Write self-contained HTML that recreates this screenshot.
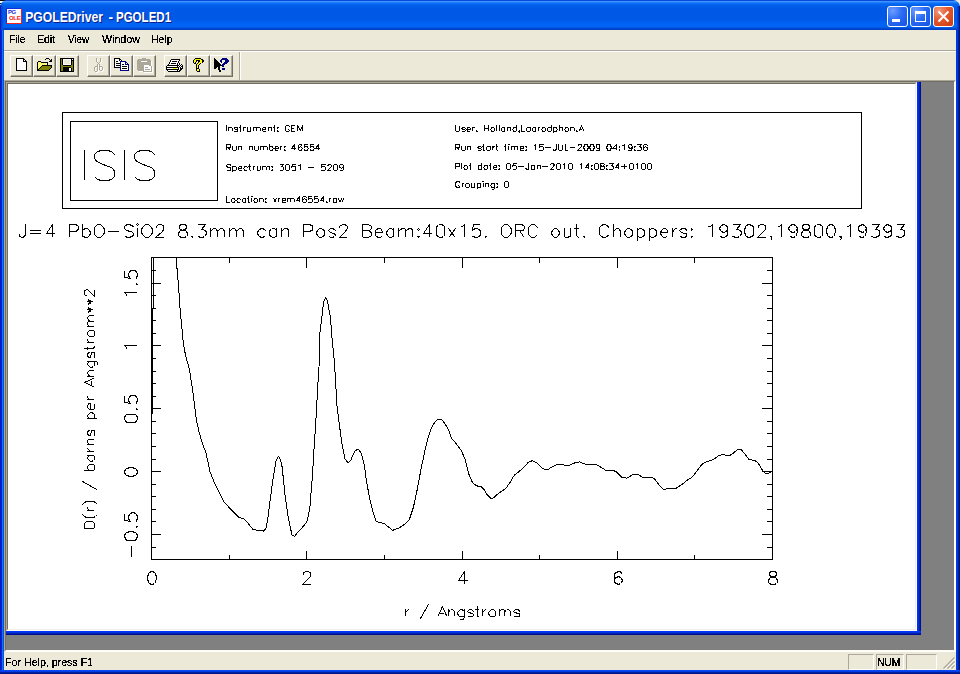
<!DOCTYPE html>
<html><head><meta charset="utf-8"><style>
*{box-sizing:border-box}
html,body{margin:0;padding:0}
body{width:960px;height:674px;overflow:hidden;position:relative;background:#ece9d8;font-family:"Liberation Sans",sans-serif}
.a{position:absolute}
svg text{font-family:"Liberation Sans",sans-serif}
.btn{position:absolute;top:55px;width:23px;height:22px;border-style:solid;border-width:1px;border-color:#fff #716f64 #716f64 #fff;box-shadow:inset -1px -1px 0 #aca899}
</style></head><body>
<!-- frame -->
<div class="a" style="left:0;top:0;width:960px;height:674px;background:#0050e0"></div>
<div class="a" style="left:0;top:30px;width:4px;height:644px;background:linear-gradient(90deg,#0010d0 0,#0820cc 1px,#0a24cc 2px,#1870ee 2px,#1870ee 3px,#0055e2 3px)"></div>
<div class="a" style="left:956px;top:30px;width:4px;height:644px;background:linear-gradient(90deg,#0037f0 0,#0037f0 1px,#003ad0 1px,#003ad0 2px,#00228f 2px,#00228f 3px,#001580 3px)"></div>
<div class="a" style="left:0;top:670px;width:960px;height:4px;background:linear-gradient(180deg,#0a47f0 0,#0a47f0 1px,#003de8 1px,#003de8 2px,#0022a0 2px,#0022a0 3px,#00138a 3px)"></div>
<!-- title bar -->
<div class="a" style="left:0;top:0;width:8px;height:8px;background:linear-gradient(180deg,#000 0,#000 1px,#fff 1px,#fff 3px,#000 3px,#000 4px,#fff 4px,#fff 5px,#000 5px)"></div>
<div class="a" style="left:952px;top:0;width:8px;height:8px;background:#ece9d8"></div>
<div class="a" style="left:0;top:0;width:960px;height:30px;border-radius:7px 7px 0 0;background:linear-gradient(180deg,#0a48d8 0px,#0a48d8 1px,#3d95ff 1px,#3d95ff 2px,#2b8aff 2px,#1274fa 3px,#0666ef 4px,#005fe8 6px,#0058e6 9px,#0058e6 18px,#005ae9 20px,#0064f6 24px,#0062f3 27px,#0052dc 28px,#003fc3 29px,#003fc3 30px)"></div>
<div class="a" style="left:0;top:6px;width:3px;height:24px;background:linear-gradient(90deg,#0020c0 0,#0020c0 1px,#0a40d8 1px,#0a40d8 2px,#0050e0 2px)"></div>
<div class="a" style="left:957px;top:6px;width:3px;height:24px;background:linear-gradient(90deg,#0048d8 0,#0048d8 1px,#0030b8 1px,#0030b8 2px,#001a90 2px)"></div>
<!-- title icon -->
<div class="a" style="left:6px;top:8px;width:16px;height:16px;background:#fff;border-left:1px solid #1030e0;border-top:1px solid #1030e0;border-right:1px solid #f02020;border-bottom:1px solid #f02020"></div>
<div class="a" style="left:8px;top:9px;font:bold 6px 'Liberation Sans',sans-serif;color:#1a2ad8;letter-spacing:-0.5px">PG</div>
<div class="a" style="left:9px;top:15px;font:bold 6px 'Liberation Sans',sans-serif;color:#f01818;letter-spacing:-0.3px">OLE</div>
<svg class="a" style="left:0;top:0" width="300" height="30" font-family="Liberation Sans" font-weight="bold"><g fill="#0a1f8a" transform="translate(1,1)"><text x="25.19" y="22" font-size="15.5" textLength="77.80" lengthAdjust="spacingAndGlyphs">PGOLEDriver</text>
<text x="108.46" y="22" font-size="15.5" textLength="4.59" lengthAdjust="spacingAndGlyphs">-</text>
<text x="115.93" y="22" font-size="15.5" textLength="55.19" lengthAdjust="spacingAndGlyphs">PGOLED1</text></g><g fill="#fff"><text x="25.19" y="22" font-size="15.5" textLength="77.80" lengthAdjust="spacingAndGlyphs">PGOLEDriver</text>
<text x="108.46" y="22" font-size="15.5" textLength="4.59" lengthAdjust="spacingAndGlyphs">-</text>
<text x="115.93" y="22" font-size="15.5" textLength="55.19" lengthAdjust="spacingAndGlyphs">PGOLED1</text></g></svg>
<!-- caption buttons -->
<div class="a" style="left:887px;top:6px;width:21px;height:21px;border:1px solid #fff;border-radius:3px;background:radial-gradient(circle at 25% 20%,#6f9cff 0,#2a6cf5 45%,#1550e0 100%)"></div>
<div class="a" style="left:892px;top:19px;width:8px;height:3px;background:#fff"></div>
<div class="a" style="left:910px;top:6px;width:21px;height:21px;border:1px solid #fff;border-radius:3px;background:radial-gradient(circle at 25% 20%,#6f9cff 0,#2a6cf5 45%,#1550e0 100%)"></div>
<div class="a" style="left:915px;top:11px;width:11px;height:11px;border:1px solid #fff;border-top-width:3px"></div>
<div class="a" style="left:933px;top:6px;width:21px;height:21px;border:1px solid #fff;border-radius:3px;background:radial-gradient(circle at 25% 20%,#f29b7c 0,#e4582e 45%,#c83a10 100%)"></div>
<svg class="a" style="left:933px;top:6px" width="21" height="21"><path d="M5.5,5.5L15.5,15.5M15.5,5.5L5.5,15.5" stroke="#fff" stroke-width="2"/></svg>
<!-- menu bar -->
<div class="a" style="left:4px;top:30px;width:952px;height:20px;background:#ece9d8"></div>
<svg class="a" style="left:0;top:30px" width="300" height="20" viewBox="0 30 300 20" font-family="Liberation Sans" fill="#000"><filter id="u1" x="0" y="0" width="100%" height="100%"><feComponentTransfer><feFuncA type="discrete" tableValues="0 1 1"/></feComponentTransfer></filter><g filter="url(#u1)"><text x="9.17" y="43" font-size="11" textLength="16.28" lengthAdjust="spacingAndGlyphs">File</text>
<text x="37.15" y="43" font-size="11" textLength="17.93" lengthAdjust="spacingAndGlyphs">Edit</text>
<text x="67.96" y="43" font-size="11" textLength="21.02" lengthAdjust="spacingAndGlyphs">View</text>
<text x="101.95" y="43" font-size="11" textLength="38.02" lengthAdjust="spacingAndGlyphs">Window</text>
<text x="151.15" y="43" font-size="11" textLength="21.28" lengthAdjust="spacingAndGlyphs">Help</text></g></svg>
<div class="a" style="left:4px;top:50px;width:952px;height:1px;background:#aca899"></div>
<div class="a" style="left:4px;top:51px;width:952px;height:1px;background:#fff"></div>
<!-- toolbar -->
<div class="a" style="left:4px;top:52px;width:952px;height:28px;background:#ece9d8"></div>
<div class="a" style="left:239px;top:52px;width:1px;height:28px;background:#aca899"></div>
<div class="a" style="left:240px;top:52px;width:1px;height:28px;background:#fff"></div>
<div class="btn" style="left:10px"></div><div class="btn" style="left:33px"></div><div class="btn" style="left:56px"></div>
<div class="btn" style="left:87px"></div><div class="btn" style="left:110px"></div><div class="btn" style="left:133px"></div>
<div class="btn" style="left:164px"></div><div class="btn" style="left:187px"></div><div class="btn" style="left:210px"></div>

<svg class="a" style="left:0;top:50px" width="240" height="30" viewBox="0 50 240 30" shape-rendering="crispEdges"><rect x="16" y="58" width="8" height="1" fill="#000"/><rect x="16" y="59" width="1" height="1" fill="#000"/><rect x="17" y="59" width="6" height="1" fill="#fff"/><rect x="23" y="59" width="2" height="1" fill="#000"/><rect x="16" y="60" width="1" height="1" fill="#000"/><rect x="17" y="60" width="6" height="1" fill="#fff"/><rect x="23" y="60" width="1" height="1" fill="#000"/><rect x="24" y="60" width="1" height="1" fill="#fff"/><rect x="25" y="60" width="1" height="1" fill="#000"/><rect x="16" y="61" width="1" height="1" fill="#000"/><rect x="17" y="61" width="6" height="1" fill="#fff"/><rect x="23" y="61" width="4" height="1" fill="#000"/><rect x="16" y="62" width="1" height="1" fill="#000"/><rect x="17" y="62" width="9" height="1" fill="#fff"/><rect x="26" y="62" width="1" height="1" fill="#000"/><rect x="16" y="63" width="1" height="1" fill="#000"/><rect x="17" y="63" width="9" height="1" fill="#fff"/><rect x="26" y="63" width="1" height="1" fill="#000"/><rect x="16" y="64" width="1" height="1" fill="#000"/><rect x="17" y="64" width="9" height="1" fill="#fff"/><rect x="26" y="64" width="1" height="1" fill="#000"/><rect x="16" y="65" width="1" height="1" fill="#000"/><rect x="17" y="65" width="9" height="1" fill="#fff"/><rect x="26" y="65" width="1" height="1" fill="#000"/><rect x="16" y="66" width="1" height="1" fill="#000"/><rect x="17" y="66" width="9" height="1" fill="#fff"/><rect x="26" y="66" width="1" height="1" fill="#000"/><rect x="16" y="67" width="1" height="1" fill="#000"/><rect x="17" y="67" width="9" height="1" fill="#fff"/><rect x="26" y="67" width="1" height="1" fill="#000"/><rect x="16" y="68" width="1" height="1" fill="#000"/><rect x="17" y="68" width="9" height="1" fill="#fff"/><rect x="26" y="68" width="1" height="1" fill="#000"/><rect x="16" y="69" width="1" height="1" fill="#000"/><rect x="17" y="69" width="9" height="1" fill="#fff"/><rect x="26" y="69" width="1" height="1" fill="#000"/><rect x="16" y="70" width="11" height="1" fill="#000"/><rect x="46" y="58" width="3" height="1" fill="#000"/><rect x="45" y="59" width="1" height="1" fill="#000"/><rect x="49" y="59" width="1" height="1" fill="#000"/><rect x="51" y="59" width="1" height="1" fill="#000"/><rect x="50" y="60" width="2" height="1" fill="#000"/><rect x="38" y="61" width="3" height="1" fill="#000"/><rect x="49" y="61" width="3" height="1" fill="#000"/><rect x="37" y="62" width="1" height="1" fill="#000"/><rect x="38" y="62" width="1" height="1" fill="#ff0"/><rect x="39" y="62" width="1" height="1" fill="#fff"/><rect x="40" y="62" width="1" height="1" fill="#ff0"/><rect x="41" y="62" width="7" height="1" fill="#000"/><rect x="37" y="63" width="1" height="1" fill="#000"/><rect x="38" y="63" width="1" height="1" fill="#fff"/><rect x="39" y="63" width="1" height="1" fill="#ff0"/><rect x="40" y="63" width="1" height="1" fill="#fff"/><rect x="41" y="63" width="1" height="1" fill="#ff0"/><rect x="42" y="63" width="1" height="1" fill="#fff"/><rect x="43" y="63" width="1" height="1" fill="#ff0"/><rect x="44" y="63" width="1" height="1" fill="#fff"/><rect x="45" y="63" width="1" height="1" fill="#ff0"/><rect x="46" y="63" width="1" height="1" fill="#fff"/><rect x="47" y="63" width="1" height="1" fill="#000"/><rect x="37" y="64" width="1" height="1" fill="#000"/><rect x="38" y="64" width="1" height="1" fill="#ff0"/><rect x="39" y="64" width="1" height="1" fill="#fff"/><rect x="40" y="64" width="1" height="1" fill="#ff0"/><rect x="41" y="64" width="1" height="1" fill="#fff"/><rect x="42" y="64" width="1" height="1" fill="#ff0"/><rect x="43" y="64" width="1" height="1" fill="#fff"/><rect x="44" y="64" width="1" height="1" fill="#ff0"/><rect x="45" y="64" width="1" height="1" fill="#fff"/><rect x="46" y="64" width="1" height="1" fill="#ff0"/><rect x="47" y="64" width="1" height="1" fill="#000"/><rect x="37" y="65" width="1" height="1" fill="#000"/><rect x="38" y="65" width="1" height="1" fill="#fff"/><rect x="39" y="65" width="1" height="1" fill="#ff0"/><rect x="40" y="65" width="1" height="1" fill="#fff"/><rect x="41" y="65" width="1" height="1" fill="#ff0"/><rect x="42" y="65" width="10" height="1" fill="#000"/><rect x="37" y="66" width="1" height="1" fill="#000"/><rect x="38" y="66" width="1" height="1" fill="#ff0"/><rect x="39" y="66" width="1" height="1" fill="#fff"/><rect x="40" y="66" width="1" height="1" fill="#ff0"/><rect x="41" y="66" width="1" height="1" fill="#000"/><rect x="42" y="66" width="9" height="1" fill="#808000"/><rect x="51" y="66" width="1" height="1" fill="#000"/><rect x="37" y="67" width="1" height="1" fill="#000"/><rect x="38" y="67" width="1" height="1" fill="#fff"/><rect x="39" y="67" width="1" height="1" fill="#ff0"/><rect x="40" y="67" width="1" height="1" fill="#000"/><rect x="41" y="67" width="10" height="1" fill="#808000"/><rect x="51" y="67" width="1" height="1" fill="#000"/><rect x="37" y="68" width="1" height="1" fill="#000"/><rect x="38" y="68" width="1" height="1" fill="#ff0"/><rect x="39" y="68" width="1" height="1" fill="#000"/><rect x="40" y="68" width="10" height="1" fill="#808000"/><rect x="50" y="68" width="1" height="1" fill="#000"/><rect x="37" y="69" width="2" height="1" fill="#000"/><rect x="39" y="69" width="10" height="1" fill="#808000"/><rect x="49" y="69" width="1" height="1" fill="#000"/><rect x="37" y="70" width="12" height="1" fill="#000"/><rect x="60" y="58" width="14" height="1" fill="#000"/><rect x="60" y="59" width="1" height="1" fill="#000"/><rect x="61" y="59" width="1" height="1" fill="#808000"/><rect x="62" y="59" width="1" height="1" fill="#000"/><rect x="63" y="59" width="8" height="1" fill="#fff"/><rect x="71" y="59" width="1" height="1" fill="#000"/><rect x="72" y="59" width="1" height="1" fill="#fff"/><rect x="73" y="59" width="1" height="1" fill="#000"/><rect x="60" y="60" width="1" height="1" fill="#000"/><rect x="61" y="60" width="1" height="1" fill="#808000"/><rect x="62" y="60" width="1" height="1" fill="#000"/><rect x="63" y="60" width="1" height="1" fill="#fff"/><rect x="64" y="60" width="6" height="1" fill="#ece9d8"/><rect x="70" y="60" width="1" height="1" fill="#fff"/><rect x="71" y="60" width="3" height="1" fill="#000"/><rect x="60" y="61" width="1" height="1" fill="#000"/><rect x="61" y="61" width="1" height="1" fill="#808000"/><rect x="62" y="61" width="1" height="1" fill="#000"/><rect x="63" y="61" width="1" height="1" fill="#fff"/><rect x="64" y="61" width="6" height="1" fill="#ece9d8"/><rect x="70" y="61" width="1" height="1" fill="#fff"/><rect x="71" y="61" width="1" height="1" fill="#000"/><rect x="72" y="61" width="1" height="1" fill="#808000"/><rect x="73" y="61" width="1" height="1" fill="#000"/><rect x="60" y="62" width="1" height="1" fill="#000"/><rect x="61" y="62" width="1" height="1" fill="#808000"/><rect x="62" y="62" width="1" height="1" fill="#000"/><rect x="63" y="62" width="1" height="1" fill="#fff"/><rect x="64" y="62" width="6" height="1" fill="#ece9d8"/><rect x="70" y="62" width="1" height="1" fill="#fff"/><rect x="71" y="62" width="1" height="1" fill="#000"/><rect x="72" y="62" width="1" height="1" fill="#808000"/><rect x="73" y="62" width="1" height="1" fill="#000"/><rect x="60" y="63" width="1" height="1" fill="#000"/><rect x="61" y="63" width="1" height="1" fill="#808000"/><rect x="62" y="63" width="1" height="1" fill="#000"/><rect x="63" y="63" width="1" height="1" fill="#fff"/><rect x="64" y="63" width="6" height="1" fill="#ece9d8"/><rect x="70" y="63" width="1" height="1" fill="#fff"/><rect x="71" y="63" width="1" height="1" fill="#000"/><rect x="72" y="63" width="1" height="1" fill="#808000"/><rect x="73" y="63" width="1" height="1" fill="#000"/><rect x="60" y="64" width="1" height="1" fill="#000"/><rect x="61" y="64" width="1" height="1" fill="#808000"/><rect x="62" y="64" width="1" height="1" fill="#000"/><rect x="63" y="64" width="8" height="1" fill="#fff"/><rect x="71" y="64" width="1" height="1" fill="#000"/><rect x="72" y="64" width="1" height="1" fill="#808000"/><rect x="73" y="64" width="1" height="1" fill="#000"/><rect x="60" y="65" width="1" height="1" fill="#000"/><rect x="61" y="65" width="2" height="1" fill="#808000"/><rect x="63" y="65" width="8" height="1" fill="#000"/><rect x="71" y="65" width="2" height="1" fill="#808000"/><rect x="73" y="65" width="1" height="1" fill="#000"/><rect x="60" y="66" width="1" height="1" fill="#000"/><rect x="61" y="66" width="12" height="1" fill="#808000"/><rect x="73" y="66" width="1" height="1" fill="#000"/><rect x="60" y="67" width="1" height="1" fill="#000"/><rect x="61" y="67" width="2" height="1" fill="#808000"/><rect x="63" y="67" width="8" height="1" fill="#000"/><rect x="71" y="67" width="2" height="1" fill="#808000"/><rect x="73" y="67" width="1" height="1" fill="#000"/><rect x="60" y="68" width="1" height="1" fill="#000"/><rect x="61" y="68" width="2" height="1" fill="#808000"/><rect x="63" y="68" width="6" height="1" fill="#000"/><rect x="69" y="68" width="2" height="1" fill="#fff"/><rect x="71" y="68" width="1" height="1" fill="#000"/><rect x="72" y="68" width="1" height="1" fill="#808000"/><rect x="73" y="68" width="1" height="1" fill="#000"/><rect x="60" y="69" width="1" height="1" fill="#000"/><rect x="61" y="69" width="2" height="1" fill="#808000"/><rect x="63" y="69" width="6" height="1" fill="#000"/><rect x="69" y="69" width="2" height="1" fill="#fff"/><rect x="71" y="69" width="1" height="1" fill="#000"/><rect x="72" y="69" width="1" height="1" fill="#808000"/><rect x="73" y="69" width="1" height="1" fill="#000"/><rect x="60" y="70" width="1" height="1" fill="#000"/><rect x="61" y="70" width="2" height="1" fill="#808000"/><rect x="63" y="70" width="6" height="1" fill="#000"/><rect x="69" y="70" width="2" height="1" fill="#fff"/><rect x="71" y="70" width="1" height="1" fill="#000"/><rect x="72" y="70" width="1" height="1" fill="#808000"/><rect x="73" y="70" width="1" height="1" fill="#000"/><rect x="60" y="71" width="14" height="1" fill="#000"/><rect x="97" y="59" width="1" height="1" fill="#fff"/><rect x="101" y="59" width="1" height="1" fill="#fff"/><rect x="97" y="60" width="1" height="1" fill="#fff"/><rect x="101" y="60" width="1" height="1" fill="#fff"/><rect x="97" y="61" width="1" height="1" fill="#fff"/><rect x="101" y="61" width="1" height="1" fill="#fff"/><rect x="97" y="62" width="1" height="1" fill="#fff"/><rect x="101" y="62" width="1" height="1" fill="#fff"/><rect x="98" y="63" width="1" height="1" fill="#fff"/><rect x="100" y="63" width="1" height="1" fill="#fff"/><rect x="99" y="64" width="1" height="1" fill="#fff"/><rect x="98" y="65" width="1" height="1" fill="#fff"/><rect x="100" y="65" width="1" height="1" fill="#fff"/><rect x="98" y="66" width="1" height="1" fill="#fff"/><rect x="100" y="66" width="1" height="1" fill="#fff"/><rect x="96" y="67" width="3" height="1" fill="#fff"/><rect x="100" y="67" width="3" height="1" fill="#fff"/><rect x="95" y="68" width="1" height="1" fill="#fff"/><rect x="98" y="68" width="1" height="1" fill="#fff"/><rect x="100" y="68" width="1" height="1" fill="#fff"/><rect x="103" y="68" width="1" height="1" fill="#fff"/><rect x="95" y="69" width="1" height="1" fill="#fff"/><rect x="98" y="69" width="1" height="1" fill="#fff"/><rect x="100" y="69" width="1" height="1" fill="#fff"/><rect x="103" y="69" width="1" height="1" fill="#fff"/><rect x="95" y="70" width="1" height="1" fill="#fff"/><rect x="98" y="70" width="1" height="1" fill="#fff"/><rect x="100" y="70" width="1" height="1" fill="#fff"/><rect x="103" y="70" width="1" height="1" fill="#fff"/><rect x="95" y="71" width="1" height="1" fill="#fff"/><rect x="98" y="71" width="1" height="1" fill="#fff"/><rect x="101" y="71" width="2" height="1" fill="#fff"/><rect x="96" y="72" width="2" height="1" fill="#fff"/><rect x="96" y="58" width="1" height="1" fill="#aca899"/><rect x="100" y="58" width="1" height="1" fill="#aca899"/><rect x="96" y="59" width="1" height="1" fill="#aca899"/><rect x="100" y="59" width="1" height="1" fill="#aca899"/><rect x="96" y="60" width="1" height="1" fill="#aca899"/><rect x="100" y="60" width="1" height="1" fill="#aca899"/><rect x="96" y="61" width="1" height="1" fill="#aca899"/><rect x="100" y="61" width="1" height="1" fill="#aca899"/><rect x="97" y="62" width="1" height="1" fill="#aca899"/><rect x="99" y="62" width="1" height="1" fill="#aca899"/><rect x="98" y="63" width="1" height="1" fill="#aca899"/><rect x="97" y="64" width="1" height="1" fill="#aca899"/><rect x="99" y="64" width="1" height="1" fill="#aca899"/><rect x="97" y="65" width="1" height="1" fill="#aca899"/><rect x="99" y="65" width="1" height="1" fill="#aca899"/><rect x="95" y="66" width="3" height="1" fill="#aca899"/><rect x="99" y="66" width="3" height="1" fill="#aca899"/><rect x="94" y="67" width="1" height="1" fill="#aca899"/><rect x="97" y="67" width="1" height="1" fill="#aca899"/><rect x="99" y="67" width="1" height="1" fill="#aca899"/><rect x="102" y="67" width="1" height="1" fill="#aca899"/><rect x="94" y="68" width="1" height="1" fill="#aca899"/><rect x="97" y="68" width="1" height="1" fill="#aca899"/><rect x="99" y="68" width="1" height="1" fill="#aca899"/><rect x="102" y="68" width="1" height="1" fill="#aca899"/><rect x="94" y="69" width="1" height="1" fill="#aca899"/><rect x="97" y="69" width="1" height="1" fill="#aca899"/><rect x="99" y="69" width="1" height="1" fill="#aca899"/><rect x="102" y="69" width="1" height="1" fill="#aca899"/><rect x="94" y="70" width="1" height="1" fill="#aca899"/><rect x="97" y="70" width="1" height="1" fill="#aca899"/><rect x="100" y="70" width="2" height="1" fill="#aca899"/><rect x="95" y="71" width="2" height="1" fill="#aca899"/><rect x="114" y="58" width="6" height="1" fill="#000"/><rect x="114" y="59" width="1" height="1" fill="#000"/><rect x="115" y="59" width="4" height="1" fill="#fff"/><rect x="119" y="59" width="2" height="1" fill="#000"/><rect x="114" y="60" width="1" height="1" fill="#000"/><rect x="115" y="60" width="4" height="1" fill="#fff"/><rect x="119" y="60" width="1" height="1" fill="#000"/><rect x="120" y="60" width="1" height="1" fill="#fff"/><rect x="121" y="60" width="1" height="1" fill="#000"/><rect x="114" y="61" width="1" height="1" fill="#000"/><rect x="115" y="61" width="1" height="1" fill="#fff"/><rect x="116" y="61" width="2" height="1" fill="#000"/><rect x="118" y="61" width="2" height="1" fill="#fff"/><rect x="120" y="61" width="6" height="1" fill="#000080"/><rect x="114" y="62" width="1" height="1" fill="#000"/><rect x="115" y="62" width="5" height="1" fill="#fff"/><rect x="120" y="62" width="1" height="1" fill="#000080"/><rect x="121" y="62" width="4" height="1" fill="#fff"/><rect x="125" y="62" width="2" height="1" fill="#000080"/><rect x="114" y="63" width="1" height="1" fill="#000"/><rect x="115" y="63" width="1" height="1" fill="#fff"/><rect x="116" y="63" width="4" height="1" fill="#000"/><rect x="120" y="63" width="1" height="1" fill="#000080"/><rect x="121" y="63" width="4" height="1" fill="#fff"/><rect x="125" y="63" width="1" height="1" fill="#000080"/><rect x="126" y="63" width="1" height="1" fill="#fff"/><rect x="127" y="63" width="1" height="1" fill="#000080"/><rect x="114" y="64" width="1" height="1" fill="#000"/><rect x="115" y="64" width="5" height="1" fill="#fff"/><rect x="120" y="64" width="1" height="1" fill="#000080"/><rect x="121" y="64" width="1" height="1" fill="#fff"/><rect x="122" y="64" width="2" height="1" fill="#000"/><rect x="124" y="64" width="1" height="1" fill="#fff"/><rect x="125" y="64" width="4" height="1" fill="#000080"/><rect x="114" y="65" width="1" height="1" fill="#000"/><rect x="115" y="65" width="1" height="1" fill="#fff"/><rect x="116" y="65" width="4" height="1" fill="#000"/><rect x="120" y="65" width="1" height="1" fill="#000080"/><rect x="121" y="65" width="7" height="1" fill="#fff"/><rect x="128" y="65" width="1" height="1" fill="#000080"/><rect x="114" y="66" width="1" height="1" fill="#000"/><rect x="115" y="66" width="5" height="1" fill="#fff"/><rect x="120" y="66" width="1" height="1" fill="#000080"/><rect x="121" y="66" width="1" height="1" fill="#fff"/><rect x="122" y="66" width="5" height="1" fill="#000"/><rect x="127" y="66" width="1" height="1" fill="#fff"/><rect x="128" y="66" width="1" height="1" fill="#000080"/><rect x="114" y="67" width="6" height="1" fill="#000"/><rect x="120" y="67" width="1" height="1" fill="#000080"/><rect x="121" y="67" width="7" height="1" fill="#fff"/><rect x="128" y="67" width="1" height="1" fill="#000080"/><rect x="120" y="68" width="1" height="1" fill="#000080"/><rect x="121" y="68" width="1" height="1" fill="#fff"/><rect x="122" y="68" width="5" height="1" fill="#000"/><rect x="127" y="68" width="1" height="1" fill="#fff"/><rect x="128" y="68" width="1" height="1" fill="#000080"/><rect x="120" y="69" width="1" height="1" fill="#000080"/><rect x="121" y="69" width="7" height="1" fill="#fff"/><rect x="128" y="69" width="1" height="1" fill="#000080"/><rect x="120" y="70" width="9" height="1" fill="#000080"/><rect x="143" y="59" width="4" height="1" fill="#fff"/><rect x="139" y="60" width="12" height="1" fill="#fff"/><rect x="138" y="61" width="14" height="1" fill="#fff"/><rect x="138" y="62" width="4" height="1" fill="#fff"/><rect x="148" y="62" width="4" height="1" fill="#fff"/><rect x="138" y="63" width="14" height="1" fill="#fff"/><rect x="138" y="64" width="14" height="1" fill="#fff"/><rect x="138" y="65" width="14" height="1" fill="#fff"/><rect x="138" y="66" width="7" height="1" fill="#fff"/><rect x="150" y="66" width="2" height="1" fill="#fff"/><rect x="138" y="67" width="7" height="1" fill="#fff"/><rect x="152" y="67" width="1" height="1" fill="#fff"/><rect x="138" y="68" width="7" height="1" fill="#fff"/><rect x="146" y="68" width="3" height="1" fill="#fff"/><rect x="152" y="68" width="1" height="1" fill="#fff"/><rect x="138" y="69" width="7" height="1" fill="#fff"/><rect x="152" y="69" width="1" height="1" fill="#fff"/><rect x="138" y="70" width="7" height="1" fill="#fff"/><rect x="146" y="70" width="5" height="1" fill="#fff"/><rect x="152" y="70" width="1" height="1" fill="#fff"/><rect x="139" y="71" width="6" height="1" fill="#fff"/><rect x="152" y="71" width="1" height="1" fill="#fff"/><rect x="144" y="72" width="9" height="1" fill="#fff"/><rect x="142" y="58" width="4" height="1" fill="#aca899"/><rect x="138" y="59" width="12" height="1" fill="#aca899"/><rect x="137" y="60" width="14" height="1" fill="#aca899"/><rect x="137" y="61" width="4" height="1" fill="#aca899"/><rect x="141" y="61" width="6" height="1" fill="#fff"/><rect x="147" y="61" width="4" height="1" fill="#aca899"/><rect x="137" y="62" width="14" height="1" fill="#aca899"/><rect x="137" y="63" width="14" height="1" fill="#aca899"/><rect x="137" y="64" width="14" height="1" fill="#aca899"/><rect x="137" y="65" width="7" height="1" fill="#aca899"/><rect x="144" y="65" width="5" height="1" fill="#fff"/><rect x="149" y="65" width="2" height="1" fill="#aca899"/><rect x="137" y="66" width="7" height="1" fill="#aca899"/><rect x="144" y="66" width="7" height="1" fill="#fff"/><rect x="151" y="66" width="1" height="1" fill="#aca899"/><rect x="137" y="67" width="7" height="1" fill="#aca899"/><rect x="144" y="67" width="1" height="1" fill="#fff"/><rect x="145" y="67" width="3" height="1" fill="#aca899"/><rect x="148" y="67" width="3" height="1" fill="#fff"/><rect x="151" y="67" width="1" height="1" fill="#aca899"/><rect x="137" y="68" width="7" height="1" fill="#aca899"/><rect x="144" y="68" width="7" height="1" fill="#fff"/><rect x="151" y="68" width="1" height="1" fill="#aca899"/><rect x="137" y="69" width="7" height="1" fill="#aca899"/><rect x="144" y="69" width="1" height="1" fill="#fff"/><rect x="145" y="69" width="5" height="1" fill="#aca899"/><rect x="150" y="69" width="1" height="1" fill="#fff"/><rect x="151" y="69" width="1" height="1" fill="#aca899"/><rect x="138" y="70" width="6" height="1" fill="#aca899"/><rect x="144" y="70" width="7" height="1" fill="#fff"/><rect x="151" y="70" width="1" height="1" fill="#aca899"/><rect x="143" y="71" width="9" height="1" fill="#aca899"/><rect x="171" y="59" width="9" height="1" fill="#000"/><rect x="170" y="60" width="1" height="1" fill="#000"/><rect x="171" y="60" width="8" height="1" fill="#fff"/><rect x="179" y="60" width="1" height="1" fill="#000"/><rect x="170" y="61" width="1" height="1" fill="#000"/><rect x="171" y="61" width="1" height="1" fill="#fff"/><rect x="172" y="61" width="5" height="1" fill="#000"/><rect x="177" y="61" width="1" height="1" fill="#fff"/><rect x="178" y="61" width="1" height="1" fill="#000"/><rect x="169" y="62" width="1" height="1" fill="#000"/><rect x="170" y="62" width="8" height="1" fill="#fff"/><rect x="178" y="62" width="1" height="1" fill="#000"/><rect x="169" y="63" width="1" height="1" fill="#000"/><rect x="170" y="63" width="1" height="1" fill="#fff"/><rect x="171" y="63" width="5" height="1" fill="#000"/><rect x="176" y="63" width="1" height="1" fill="#fff"/><rect x="177" y="63" width="1" height="1" fill="#000"/><rect x="178" y="63" width="1" height="1" fill="#fff"/><rect x="179" y="63" width="1" height="1" fill="#000"/><rect x="168" y="64" width="1" height="1" fill="#000"/><rect x="169" y="64" width="8" height="1" fill="#fff"/><rect x="177" y="64" width="1" height="1" fill="#000"/><rect x="178" y="64" width="1" height="1" fill="#fff"/><rect x="179" y="64" width="1" height="1" fill="#000"/><rect x="180" y="64" width="1" height="1" fill="#fff"/><rect x="181" y="64" width="1" height="1" fill="#000"/><rect x="167" y="65" width="12" height="1" fill="#000"/><rect x="179" y="65" width="1" height="1" fill="#fff"/><rect x="180" y="65" width="1" height="1" fill="#000"/><rect x="181" y="65" width="1" height="1" fill="#fff"/><rect x="182" y="65" width="1" height="1" fill="#000"/><rect x="166" y="66" width="1" height="1" fill="#000"/><rect x="167" y="66" width="10" height="1" fill="#fff"/><rect x="177" y="66" width="1" height="1" fill="#000"/><rect x="178" y="66" width="1" height="1" fill="#fff"/><rect x="179" y="66" width="1" height="1" fill="#000"/><rect x="180" y="66" width="1" height="1" fill="#fff"/><rect x="181" y="66" width="2" height="1" fill="#000"/><rect x="166" y="67" width="13" height="1" fill="#000"/><rect x="179" y="67" width="1" height="1" fill="#fff"/><rect x="180" y="67" width="1" height="1" fill="#000"/><rect x="181" y="67" width="1" height="1" fill="#fff"/><rect x="182" y="67" width="1" height="1" fill="#000"/><rect x="166" y="68" width="1" height="1" fill="#000"/><rect x="167" y="68" width="6" height="1" fill="#fff"/><rect x="173" y="68" width="4" height="1" fill="#ff0"/><rect x="177" y="68" width="1" height="1" fill="#fff"/><rect x="178" y="68" width="1" height="1" fill="#000"/><rect x="179" y="68" width="1" height="1" fill="#fff"/><rect x="180" y="68" width="3" height="1" fill="#000"/><rect x="166" y="69" width="13" height="1" fill="#000"/><rect x="179" y="69" width="1" height="1" fill="#fff"/><rect x="180" y="69" width="2" height="1" fill="#000"/><rect x="167" y="70" width="1" height="1" fill="#000"/><rect x="168" y="70" width="9" height="1" fill="#fff"/><rect x="177" y="70" width="1" height="1" fill="#000"/><rect x="178" y="70" width="1" height="1" fill="#fff"/><rect x="179" y="70" width="2" height="1" fill="#000"/><rect x="168" y="71" width="12" height="1" fill="#000"/><rect x="195" y="58" width="6" height="1" fill="#000"/><rect x="194" y="59" width="1" height="1" fill="#000"/><rect x="195" y="59" width="6" height="1" fill="#ff0"/><rect x="201" y="59" width="2" height="1" fill="#000"/><rect x="193" y="60" width="1" height="1" fill="#000"/><rect x="194" y="60" width="2" height="1" fill="#ff0"/><rect x="196" y="60" width="4" height="1" fill="#000"/><rect x="200" y="60" width="2" height="1" fill="#ff0"/><rect x="202" y="60" width="2" height="1" fill="#000"/><rect x="193" y="61" width="1" height="1" fill="#000"/><rect x="194" y="61" width="2" height="1" fill="#ff0"/><rect x="196" y="61" width="1" height="1" fill="#000"/><rect x="197" y="61" width="1" height="1" fill="#fff"/><rect x="198" y="61" width="2" height="1" fill="#000"/><rect x="200" y="61" width="2" height="1" fill="#ff0"/><rect x="202" y="61" width="2" height="1" fill="#000"/><rect x="193" y="62" width="1" height="1" fill="#000"/><rect x="194" y="62" width="1" height="1" fill="#ff0"/><rect x="195" y="62" width="1" height="1" fill="#000"/><rect x="198" y="62" width="1" height="1" fill="#000"/><rect x="199" y="62" width="3" height="1" fill="#ff0"/><rect x="202" y="62" width="1" height="1" fill="#000"/><rect x="194" y="63" width="2" height="1" fill="#000"/><rect x="197" y="63" width="1" height="1" fill="#000"/><rect x="198" y="63" width="2" height="1" fill="#ff0"/><rect x="200" y="63" width="1" height="1" fill="#000"/><rect x="196" y="64" width="1" height="1" fill="#000"/><rect x="197" y="64" width="2" height="1" fill="#ff0"/><rect x="199" y="64" width="1" height="1" fill="#000"/><rect x="196" y="65" width="1" height="1" fill="#000"/><rect x="197" y="65" width="1" height="1" fill="#ff0"/><rect x="198" y="65" width="1" height="1" fill="#000"/><rect x="196" y="66" width="1" height="1" fill="#000"/><rect x="197" y="66" width="1" height="1" fill="#ff0"/><rect x="198" y="66" width="1" height="1" fill="#000"/><rect x="196" y="67" width="1" height="1" fill="#000"/><rect x="197" y="67" width="1" height="1" fill="#ff0"/><rect x="198" y="67" width="1" height="1" fill="#000"/><rect x="196" y="68" width="3" height="1" fill="#000"/><rect x="196" y="69" width="1" height="1" fill="#000"/><rect x="197" y="69" width="2" height="1" fill="#ff0"/><rect x="199" y="69" width="1" height="1" fill="#000"/><rect x="196" y="70" width="1" height="1" fill="#000"/><rect x="197" y="70" width="2" height="1" fill="#ff0"/><rect x="199" y="70" width="1" height="1" fill="#000"/><rect x="197" y="71" width="3" height="1" fill="#000"/><rect x="214" y="58" width="1" height="1" fill="#000"/><rect x="222" y="58" width="5" height="1" fill="#000080"/><rect x="214" y="59" width="2" height="1" fill="#000"/><rect x="221" y="59" width="7" height="1" fill="#000080"/><rect x="214" y="60" width="3" height="1" fill="#000"/><rect x="220" y="60" width="2" height="1" fill="#000080"/><rect x="225" y="60" width="4" height="1" fill="#000080"/><rect x="214" y="61" width="4" height="1" fill="#000"/><rect x="220" y="61" width="2" height="1" fill="#000080"/><rect x="225" y="61" width="4" height="1" fill="#000080"/><rect x="214" y="62" width="5" height="1" fill="#000"/><rect x="221" y="62" width="1" height="1" fill="#000080"/><rect x="224" y="62" width="4" height="1" fill="#000080"/><rect x="214" y="63" width="6" height="1" fill="#000"/><rect x="223" y="63" width="4" height="1" fill="#000080"/><rect x="214" y="64" width="7" height="1" fill="#000"/><rect x="222" y="64" width="3" height="1" fill="#000080"/><rect x="214" y="65" width="8" height="1" fill="#000"/><rect x="222" y="65" width="2" height="1" fill="#000080"/><rect x="214" y="66" width="6" height="1" fill="#000"/><rect x="222" y="66" width="2" height="1" fill="#000080"/><rect x="214" y="67" width="3" height="1" fill="#000"/><rect x="218" y="67" width="2" height="1" fill="#000"/><rect x="214" y="68" width="2" height="1" fill="#000"/><rect x="218" y="68" width="2" height="1" fill="#000"/><rect x="222" y="68" width="3" height="1" fill="#000080"/><rect x="218" y="69" width="2" height="1" fill="#000"/><rect x="222" y="69" width="3" height="1" fill="#000080"/><rect x="219" y="70" width="2" height="1" fill="#000"/><rect x="219" y="71" width="2" height="1" fill="#000"/></svg>
<!-- MDI client -->
<div class="a" style="left:4px;top:80px;width:952px;height:572px;background:#808080;border-top:1px solid #aca899;border-left:1px solid #aca899;border-right:1px solid #fff;border-bottom:1px solid #fff"></div>
<div class="a" style="left:5px;top:81px;width:950px;height:570px;border-top:1px solid #716f64;border-left:1px solid #716f64;border-right:1px solid #fffdf0;border-bottom:1px solid #fffdf0"></div>
<!-- child frame -->
<div class="a" style="left:6px;top:82px;width:915px;height:553px;background:linear-gradient(90deg,transparent 911px,#0037ff 911px,#0030e0 912px,#0030e0 913px,#0020b0 913px,#0020b0 914px,#000f90 914px)"></div>
<div class="a" style="left:6px;top:631px;width:915px;height:4px;background:linear-gradient(180deg,#0037ff 0,#0037ff 1px,#0030e0 1px,#0030e0 2px,#0020b0 2px,#0020b0 3px,#000f90 3px)"></div>
<div class="a" style="left:6px;top:82px;width:911px;height:549px;background:#fff;border-top:1px solid #aca899;border-left:1px solid #aca899;border-right:1px solid #fff;border-bottom:1px solid #fff"></div>
<div class="a" style="left:7px;top:83px;width:909px;height:547px;border-top:1px solid #716f64;border-left:1px solid #716f64;border-right:1px solid #f1efe2;border-bottom:1px solid #f1efe2"></div>

<svg width="960" height="674" viewBox="0 0 960 674" style="position:absolute;left:0;top:0">
 <defs><clipPath id="pc"><rect x="151" y="257" width="622" height="303"/></clipPath></defs>
 <g fill="none" stroke="#000" stroke-width="1" shape-rendering="crispEdges">
  <rect x="62.5" y="112.5" width="799" height="96"/>
  <rect x="70.5" y="121.5" width="147" height="79"/>
  <rect x="151.5" y="257.5" width="621" height="302"/>
  <g fill="#000" stroke="none"><rect x="229" y="555" width="1" height="4"/><rect x="229" y="258" width="1" height="5"/><rect x="306" y="551" width="1" height="8"/><rect x="306" y="258" width="1" height="10"/><rect x="384" y="555" width="1" height="4"/><rect x="384" y="258" width="1" height="5"/><rect x="462" y="551" width="1" height="8"/><rect x="462" y="258" width="1" height="10"/><rect x="539" y="555" width="1" height="4"/><rect x="539" y="258" width="1" height="5"/><rect x="617" y="551" width="1" height="8"/><rect x="617" y="258" width="1" height="10"/><rect x="694" y="555" width="1" height="4"/><rect x="694" y="258" width="1" height="5"/><rect x="152" y="270" width="4" height="1"/><rect x="767" y="270" width="5" height="1"/><rect x="152" y="283" width="9" height="1"/><rect x="762" y="283" width="10" height="1"/><rect x="152" y="295" width="4" height="1"/><rect x="767" y="295" width="5" height="1"/><rect x="152" y="308" width="4" height="1"/><rect x="767" y="308" width="5" height="1"/><rect x="152" y="320" width="4" height="1"/><rect x="767" y="320" width="5" height="1"/><rect x="152" y="333" width="4" height="1"/><rect x="767" y="333" width="5" height="1"/><rect x="152" y="345" width="9" height="1"/><rect x="762" y="345" width="10" height="1"/><rect x="152" y="358" width="4" height="1"/><rect x="767" y="358" width="5" height="1"/><rect x="152" y="371" width="4" height="1"/><rect x="767" y="371" width="5" height="1"/><rect x="152" y="383" width="4" height="1"/><rect x="767" y="383" width="5" height="1"/><rect x="152" y="396" width="4" height="1"/><rect x="767" y="396" width="5" height="1"/><rect x="152" y="408" width="9" height="1"/><rect x="762" y="408" width="10" height="1"/><rect x="152" y="421" width="4" height="1"/><rect x="767" y="421" width="5" height="1"/><rect x="152" y="433" width="4" height="1"/><rect x="767" y="433" width="5" height="1"/><rect x="152" y="446" width="4" height="1"/><rect x="767" y="446" width="5" height="1"/><rect x="152" y="459" width="4" height="1"/><rect x="767" y="459" width="5" height="1"/><rect x="152" y="471" width="9" height="1"/><rect x="762" y="471" width="10" height="1"/><rect x="152" y="484" width="4" height="1"/><rect x="767" y="484" width="5" height="1"/><rect x="152" y="496" width="4" height="1"/><rect x="767" y="496" width="5" height="1"/><rect x="152" y="509" width="4" height="1"/><rect x="767" y="509" width="5" height="1"/><rect x="152" y="521" width="4" height="1"/><rect x="767" y="521" width="5" height="1"/><rect x="152" y="534" width="9" height="1"/><rect x="762" y="534" width="10" height="1"/><rect x="152" y="547" width="4" height="1"/><rect x="767" y="547" width="5" height="1"/></g>
 </g>
 <g fill="none" stroke="#000" stroke-width="1" clip-path="url(#pc)" shape-rendering="crispEdges">
  <path d="M152.5,414V308H153.5V257 M176.4,257 L176.6,268.4 L177.5,269 L177.9,280 L178.6,281 L179.2,298 L180.8,317 L182.3,332 L183.4,344 L185.5,355 L189.3,369 L192.3,387.5 L196.4,420 L198.6,430 L201.2,440 L206,453 L210.1,472 L214.6,483.4 L217.3,488.8 L223.5,501.2 L230.6,509.2 L238.6,517.2 L243.4,518.7 L247.5,522.6 L252.9,529.3 L259.1,530.6 L263.5,531.1 L265.9,528.8 L268,517.2 L272.8,479.8 L276,461.2 L278.3,456.3 L280.5,459.4 L282.2,467.4 L284.9,494.1 L288.5,519 L292,535 L294.7,536.5 L298.3,531.5 L304.5,525.2 L307.2,520.8 L309.8,508.3 L312.5,474.5 L314.3,444.2 L315.7,423.4 L318.1,380 L319,367.5 L320,331.9 L322.3,313.4 L323.7,301.5 L325.7,298.1 L327.4,300.8 L330.4,317.1 L331.9,336.4 L334.1,358.6 L335.2,375 L337,405.6 L341.5,441.2 L345.1,459 L348.1,462.9 L350.9,459.9 L354.8,451 L358.1,449.2 L361.1,452.8 L364.6,466.1 L366,478 L369.3,496.7 L372.7,511.4 L375.8,520.7 L378.7,522.3 L384,523.4 L388,526.7 L392.7,530.3 L398.7,528.1 L404.1,524.7 L409.4,519.4 L413.4,507.4 L417.4,488.7 L421,469.1 L425,450.4 L427.7,439 L431,429 L435,421.7 L438,419.4 L441.7,419.7 L444.6,423 L448.4,429.7 L451.7,438.4 L455.1,442.4 L461.1,450.4 L465.1,459.1 L468.4,473.1 L472.4,482.4 L476.4,485.8 L481.1,486.7 L484.4,489.8 L486.4,493.8 L490.6,498.1 L493.1,498.1 L498.75,493.1 L505.6,488.75 L510,482.5 L514.4,475 L517.5,472.75 L523.1,468.1 L528.1,462.5 L532.5,460.6 L536.9,463.1 L541.25,467.5 L544.4,469.4 L548.75,469 L553.1,466.25 L557.5,464.4 L562.5,464.4 L566.25,465.6 L570,465 L575,462.75 L579.4,461.9 L585,464 L590,464.4 L595.6,464.4 L599.4,466.25 L605.6,470.25 L613.1,470.25 L616.9,472.25 L621.9,477.5 L626.9,478.1 L633.1,474.4 L638.1,474.4 L641.9,477.1 L651.9,477.25 L655,479.4 L659.4,485.6 L663.75,489.4 L668.75,488.5 L676.25,488.1 L681.25,485 L687.5,480 L692.5,476.9 L697,470.8 L701.25,465.2 L704.5,462.3 L709.7,460.9 L713.9,459.25 L718.6,455.8 L722.3,454.4 L726.1,455.3 L730.3,455.1 L734.1,452.5 L737.8,449.2 L741.1,449.4 L744.8,453.9 L749.1,459.8 L754.2,460.2 L758,462.8 L763.1,471.25 L766.4,474 L769.2,472.9 L771.5,471.25"/>
 </g>
 <g fill="none" stroke="#000" stroke-width="1" shape-rendering="crispEdges">
</g>
 <g fill="none" stroke="#000" stroke-width="1" stroke-linecap="square" stroke-linejoin="miter" shape-rendering="crispEdges">
  <path d="M25.5,224.5L25.5,234.5L24.5,236.5L22.5,237.5L21.5,237.5L20.5,236.5L19.5,236.5L19.5,234.5L19.5,234.5M30.5,230.5L40.5,230.5M30.5,233.5L40.5,233.5M52.5,224.5L46.5,233.5L54.5,233.5M52.5,224.5L52.5,236.5M69.5,224.5L69.5,236.5M69.5,224.5L75.5,224.5L77.5,225.5L78.5,226.5L78.5,228.5L77.5,230.5L75.5,231.5L70.5,231.5M82.5,224.5L82.5,236.5M82.5,230.5L83.5,229.5L85.5,228.5L87.5,228.5L88.5,229.5L89.5,230.5L90.5,232.5L90.5,233.5L89.5,235.5L88.5,236.5L87.5,237.5L85.5,237.5L83.5,236.5L83.5,236.5M97.5,224.5L96.5,225.5L95.5,226.5L94.5,227.5L94.5,229.5L94.5,232.5L94.5,234.5L95.5,235.5L96.5,236.5L97.5,237.5L100.5,237.5L101.5,236.5L102.5,235.5L103.5,234.5L104.5,232.5L104.5,229.5L103.5,227.5L102.5,226.5L101.5,225.5L100.5,224.5L98.5,224.5M108.5,231.5L118.5,231.5M133.5,226.5L131.5,225.5L129.5,224.5L127.5,224.5L125.5,225.5L124.5,226.5L124.5,227.5L124.5,228.5L125.5,229.5L126.5,230.5L130.5,231.5L131.5,231.5L132.5,232.5L133.5,233.5L133.5,235.5L131.5,236.5L129.5,237.5L127.5,237.5L125.5,236.5L125.5,236.5M136.5,224.5L137.5,225.5L138.5,224.5L137.5,223.5L137.5,223.5M137.5,228.5L137.5,236.5M145.5,224.5L144.5,225.5L143.5,226.5L142.5,227.5L141.5,229.5L141.5,232.5L142.5,234.5L143.5,235.5L144.5,236.5L145.5,237.5L148.5,237.5L149.5,236.5L150.5,235.5L151.5,234.5L152.5,232.5L152.5,229.5L151.5,227.5L150.5,226.5L149.5,225.5L148.5,224.5L146.5,224.5M156.5,227.5L156.5,226.5L157.5,225.5L158.5,224.5L161.5,224.5L162.5,225.5L163.5,225.5L163.5,226.5L163.5,228.5L163.5,229.5L162.5,231.5L155.5,237.5L163.5,237.5M181.5,224.5L179.5,225.5L179.5,226.5L179.5,227.5L179.5,228.5L180.5,229.5L183.5,230.5L185.5,230.5L186.5,231.5L187.5,233.5L187.5,235.5L186.5,236.5L184.5,237.5L181.5,237.5L179.5,236.5L178.5,235.5L178.5,233.5L179.5,231.5L180.5,230.5L182.5,230.5L184.5,229.5L186.5,228.5L186.5,227.5L186.5,226.5L186.5,225.5L184.5,224.5L182.5,224.5M192.5,236.5L191.5,236.5L192.5,237.5L192.5,237.5M198.5,224.5L205.5,224.5L201.5,229.5L203.5,229.5L204.5,230.5L205.5,230.5L206.5,232.5L206.5,233.5L205.5,235.5L204.5,236.5L202.5,237.5L200.5,237.5L198.5,236.5L198.5,236.5M210.5,228.5L210.5,236.5M210.5,231.5L212.5,229.5L213.5,228.5L215.5,228.5L216.5,229.5L217.5,231.5L217.5,236.5M217.5,231.5L219.5,229.5L220.5,228.5L222.5,228.5L223.5,229.5L224.5,231.5L224.5,236.5M229.5,228.5L229.5,236.5M229.5,231.5L231.5,229.5L232.5,228.5L234.5,228.5L235.5,229.5L236.5,231.5L236.5,236.5M236.5,231.5L238.5,229.5L239.5,228.5L241.5,228.5L242.5,229.5L243.5,231.5L243.5,236.5M265.5,230.5L264.5,229.5L262.5,228.5L261.5,228.5L259.5,229.5L258.5,230.5L257.5,232.5L257.5,233.5L258.5,235.5L259.5,236.5L261.5,237.5L262.5,237.5L264.5,236.5L264.5,236.5M276.5,228.5L276.5,236.5M276.5,230.5L275.5,229.5L274.5,228.5L272.5,228.5L271.5,229.5L269.5,230.5L269.5,232.5L269.5,233.5L269.5,235.5L271.5,236.5L272.5,237.5L274.5,237.5L275.5,236.5L275.5,236.5M281.5,228.5L281.5,236.5M281.5,231.5L283.5,229.5L284.5,228.5L286.5,228.5L288.5,229.5L288.5,231.5L288.5,236.5M303.5,224.5L303.5,236.5M303.5,224.5L309.5,224.5L311.5,225.5L312.5,225.5L312.5,226.5L312.5,228.5L312.5,230.5L311.5,230.5L309.5,231.5L304.5,231.5M319.5,228.5L318.5,229.5L317.5,230.5L316.5,232.5L316.5,233.5L317.5,235.5L318.5,236.5L319.5,237.5L321.5,237.5L322.5,236.5L324.5,235.5L324.5,233.5L324.5,232.5L324.5,230.5L322.5,229.5L321.5,228.5L320.5,228.5M335.5,230.5L334.5,229.5L332.5,228.5L330.5,228.5L329.5,229.5L328.5,230.5L329.5,231.5L330.5,232.5L333.5,233.5L334.5,233.5L335.5,235.5L334.5,236.5L332.5,237.5L330.5,237.5L329.5,236.5L329.5,236.5M339.5,227.5L339.5,226.5L340.5,225.5L341.5,225.5L342.5,224.5L344.5,224.5L346.5,225.5L347.5,226.5L347.5,228.5L346.5,229.5L345.5,231.5L339.5,237.5L346.5,237.5M362.5,224.5L362.5,236.5M362.5,224.5L368.5,224.5L369.5,225.5L370.5,225.5L371.5,226.5L371.5,228.5L370.5,229.5L369.5,230.5L369.5,230.5M362.5,230.5L368.5,230.5L369.5,231.5L370.5,231.5L371.5,233.5L371.5,235.5L370.5,236.5L369.5,236.5L368.5,237.5L363.5,237.5M375.5,232.5L382.5,232.5L382.5,231.5L381.5,230.5L381.5,229.5L380.5,228.5L378.5,228.5L376.5,229.5L375.5,230.5L375.5,232.5L375.5,233.5L375.5,235.5L376.5,236.5L378.5,237.5L380.5,237.5L381.5,236.5L381.5,236.5M393.5,228.5L393.5,236.5M393.5,230.5L392.5,229.5L391.5,228.5L389.5,228.5L388.5,229.5L387.5,230.5L386.5,232.5L386.5,233.5L387.5,235.5L388.5,236.5L389.5,237.5L391.5,237.5L392.5,236.5L392.5,236.5M398.5,228.5L398.5,236.5M398.5,231.5L400.5,229.5L402.5,228.5L404.5,228.5L405.5,229.5L405.5,231.5L405.5,236.5M405.5,231.5L407.5,229.5L409.5,228.5L410.5,228.5L412.5,229.5L412.5,231.5L412.5,236.5M418.5,228.5L417.5,229.5L418.5,230.5L419.5,229.5L419.5,229.5M418.5,236.5L417.5,236.5L418.5,237.5L419.5,236.5L419.5,236.5M429.5,224.5L423.5,233.5L431.5,233.5M429.5,224.5L429.5,236.5M439.5,224.5L438.5,225.5L436.5,226.5L436.5,230.5L436.5,231.5L436.5,235.5L438.5,236.5L439.5,237.5L441.5,237.5L443.5,236.5L444.5,235.5L444.5,231.5L444.5,230.5L444.5,226.5L443.5,225.5L441.5,224.5L440.5,224.5M448.5,228.5L454.5,236.5M455.5,228.5L449.5,236.5M461.5,226.5L462.5,226.5L464.5,224.5L464.5,236.5M479.5,224.5L473.5,224.5L472.5,230.5L473.5,229.5L475.5,228.5L477.5,228.5L478.5,229.5L480.5,230.5L480.5,232.5L480.5,233.5L480.5,235.5L478.5,236.5L477.5,237.5L475.5,237.5L473.5,236.5L472.5,236.5L472.5,236.5M485.5,236.5L485.5,237.5L486.5,236.5L486.5,236.5M504.5,224.5L503.5,225.5L502.5,226.5L501.5,227.5L501.5,229.5L501.5,232.5L501.5,234.5L502.5,235.5L503.5,236.5L504.5,237.5L507.5,237.5L508.5,236.5L509.5,235.5L510.5,234.5L511.5,232.5L511.5,229.5L510.5,227.5L509.5,226.5L508.5,225.5L507.5,224.5L505.5,224.5M515.5,224.5L515.5,236.5M515.5,224.5L521.5,224.5L523.5,225.5L524.5,226.5L524.5,228.5L523.5,229.5L523.5,230.5L521.5,230.5L516.5,230.5M519.5,230.5L523.5,236.5M537.5,227.5L536.5,226.5L535.5,225.5L534.5,224.5L531.5,224.5L530.5,225.5L529.5,226.5L528.5,227.5L528.5,229.5L528.5,232.5L528.5,234.5L529.5,235.5L530.5,236.5L531.5,237.5L534.5,237.5L535.5,236.5L536.5,235.5L536.5,235.5M554.5,228.5L553.5,229.5L552.5,230.5L551.5,232.5L551.5,233.5L552.5,235.5L553.5,236.5L554.5,237.5L556.5,237.5L557.5,236.5L558.5,235.5L559.5,233.5L559.5,232.5L558.5,230.5L557.5,229.5L556.5,228.5L555.5,228.5M564.5,228.5L564.5,235.5L564.5,236.5L565.5,237.5L567.5,237.5L569.5,236.5L569.5,236.5M570.5,228.5L570.5,236.5M576.5,224.5L576.5,235.5L577.5,236.5L578.5,237.5L578.5,237.5M574.5,228.5L578.5,228.5M584.5,236.5L583.5,236.5L584.5,237.5L584.5,237.5M608.5,227.5L608.5,226.5L606.5,225.5L605.5,224.5L603.5,224.5L601.5,225.5L600.5,226.5L599.5,227.5L599.5,229.5L599.5,232.5L599.5,234.5L600.5,235.5L601.5,236.5L603.5,237.5L605.5,237.5L606.5,236.5L608.5,235.5L608.5,235.5M613.5,224.5L613.5,236.5M613.5,231.5L615.5,229.5L616.5,228.5L618.5,228.5L619.5,229.5L620.5,231.5L620.5,236.5M627.5,228.5L626.5,229.5L625.5,230.5L624.5,232.5L624.5,233.5L625.5,235.5L626.5,236.5L627.5,237.5L629.5,237.5L630.5,236.5L632.5,235.5L632.5,233.5L632.5,232.5L632.5,230.5L630.5,229.5L629.5,228.5L628.5,228.5M637.5,228.5L637.5,240.5M637.5,230.5L638.5,229.5L639.5,228.5L641.5,228.5L642.5,229.5L644.5,230.5L644.5,232.5L644.5,233.5L644.5,235.5L642.5,236.5L641.5,237.5L639.5,237.5L638.5,236.5L638.5,236.5M649.5,228.5L649.5,240.5M649.5,230.5L650.5,229.5L651.5,228.5L653.5,228.5L654.5,229.5L656.5,230.5L656.5,232.5L656.5,233.5L656.5,235.5L654.5,236.5L653.5,237.5L651.5,237.5L650.5,236.5L650.5,236.5M660.5,232.5L667.5,232.5L667.5,231.5L667.5,230.5L666.5,229.5L665.5,228.5L663.5,228.5L662.5,229.5L661.5,230.5L660.5,232.5L660.5,233.5L661.5,235.5L662.5,236.5L663.5,237.5L665.5,237.5L666.5,236.5L666.5,236.5M672.5,228.5L672.5,236.5M672.5,232.5L673.5,230.5L674.5,229.5L675.5,228.5L676.5,228.5M686.5,230.5L686.5,229.5L684.5,228.5L682.5,228.5L680.5,229.5L679.5,230.5L680.5,231.5L681.5,232.5L684.5,233.5L686.5,233.5L686.5,235.5L686.5,236.5L684.5,237.5L682.5,237.5L680.5,236.5L680.5,236.5M691.5,228.5L691.5,229.5L691.5,230.5L692.5,229.5L692.5,229.5M691.5,236.5L691.5,237.5L692.5,236.5L692.5,236.5M708.5,226.5L710.5,226.5L712.5,224.5L712.5,236.5M727.5,228.5L727.5,230.5L725.5,231.5L724.5,232.5L723.5,232.5L721.5,231.5L720.5,230.5L719.5,228.5L720.5,226.5L721.5,225.5L723.5,224.5L724.5,224.5L725.5,225.5L727.5,226.5L727.5,228.5L727.5,231.5L727.5,235.5L725.5,236.5L724.5,237.5L722.5,237.5L720.5,236.5L720.5,236.5M733.5,224.5L740.5,224.5L736.5,229.5L738.5,229.5L739.5,230.5L740.5,230.5L741.5,232.5L741.5,233.5L740.5,235.5L739.5,236.5L737.5,237.5L735.5,237.5L733.5,236.5L732.5,236.5L732.5,236.5M748.5,224.5L746.5,225.5L745.5,226.5L744.5,230.5L744.5,231.5L745.5,235.5L746.5,236.5L748.5,237.5L749.5,237.5L751.5,236.5L753.5,235.5L753.5,231.5L753.5,230.5L753.5,226.5L751.5,225.5L749.5,224.5L749.5,224.5M758.5,227.5L758.5,226.5L758.5,225.5L759.5,225.5L760.5,224.5L763.5,224.5L764.5,225.5L765.5,225.5L765.5,226.5L765.5,228.5L765.5,229.5L763.5,231.5L757.5,237.5L765.5,237.5M771.5,236.5L771.5,237.5L770.5,236.5L771.5,236.5L771.5,238.5L771.5,239.5L771.5,239.5M778.5,226.5L779.5,226.5L781.5,224.5L781.5,236.5M797.5,228.5L796.5,230.5L795.5,231.5L793.5,232.5L792.5,232.5L790.5,231.5L789.5,230.5L788.5,228.5L789.5,226.5L790.5,225.5L792.5,224.5L793.5,224.5L795.5,225.5L796.5,226.5L797.5,228.5L797.5,231.5L796.5,235.5L795.5,236.5L793.5,237.5L792.5,237.5L790.5,236.5L790.5,236.5M804.5,224.5L802.5,225.5L802.5,226.5L802.5,227.5L802.5,228.5L804.5,229.5L806.5,230.5L808.5,230.5L809.5,231.5L810.5,233.5L810.5,235.5L809.5,236.5L807.5,237.5L804.5,237.5L802.5,236.5L801.5,235.5L801.5,233.5L802.5,231.5L803.5,230.5L805.5,230.5L807.5,229.5L809.5,228.5L809.5,227.5L809.5,226.5L809.5,225.5L807.5,224.5L805.5,224.5M817.5,224.5L816.5,225.5L814.5,226.5L814.5,230.5L814.5,231.5L814.5,235.5L816.5,236.5L817.5,237.5L819.5,237.5L821.5,236.5L822.5,235.5L822.5,231.5L822.5,230.5L822.5,226.5L821.5,225.5L819.5,224.5L818.5,224.5M830.5,224.5L828.5,225.5L827.5,226.5L826.5,230.5L826.5,231.5L827.5,235.5L828.5,236.5L830.5,237.5L831.5,237.5L833.5,236.5L834.5,235.5L835.5,231.5L835.5,230.5L834.5,226.5L833.5,225.5L831.5,224.5L831.5,224.5M841.5,236.5L840.5,237.5L839.5,236.5L840.5,236.5L841.5,236.5L841.5,238.5L840.5,239.5L840.5,239.5M847.5,226.5L848.5,226.5L850.5,224.5L850.5,236.5M866.5,228.5L865.5,230.5L864.5,231.5L862.5,232.5L860.5,231.5L858.5,230.5L858.5,228.5L858.5,226.5L860.5,225.5L862.5,224.5L864.5,225.5L865.5,226.5L866.5,228.5L866.5,231.5L865.5,235.5L864.5,236.5L862.5,237.5L861.5,237.5L859.5,236.5L859.5,236.5M872.5,224.5L879.5,224.5L875.5,229.5L877.5,229.5L878.5,230.5L879.5,230.5L879.5,232.5L879.5,233.5L879.5,235.5L877.5,236.5L875.5,237.5L873.5,237.5L872.5,236.5L871.5,236.5L871.5,236.5M891.5,228.5L891.5,230.5L889.5,231.5L887.5,232.5L885.5,231.5L884.5,230.5L883.5,228.5L884.5,226.5L885.5,225.5L887.5,224.5L889.5,225.5L891.5,226.5L891.5,228.5L891.5,231.5L891.5,235.5L889.5,236.5L887.5,237.5L886.5,237.5L884.5,236.5L884.5,236.5M897.5,224.5L904.5,224.5L900.5,229.5L902.5,229.5L903.5,230.5L904.5,230.5L904.5,232.5L904.5,233.5L904.5,235.5L902.5,236.5L901.5,237.5L899.5,237.5L897.5,236.5L896.5,236.5L896.5,236.5M151.5,571.5L149.5,572.5L148.5,573.5L147.5,577.5L147.5,578.5L148.5,582.5L149.5,583.5L151.5,584.5L152.5,584.5L154.5,583.5L155.5,582.5L156.5,578.5L156.5,577.5L155.5,573.5L154.5,572.5L152.5,571.5L152.5,571.5M303.5,574.5L303.5,573.5L303.5,572.5L304.5,572.5L305.5,571.5L308.5,571.5L309.5,572.5L310.5,572.5L310.5,573.5L310.5,575.5L310.5,576.5L308.5,578.5L302.5,584.5L310.5,584.5M464.5,571.5L458.5,580.5L467.5,580.5M464.5,571.5L464.5,583.5M621.5,573.5L621.5,572.5L619.5,571.5L618.5,571.5L616.5,572.5L614.5,573.5L614.5,577.5L614.5,580.5L614.5,582.5L616.5,583.5L618.5,584.5L620.5,583.5L621.5,582.5L622.5,580.5L621.5,578.5L620.5,577.5L618.5,576.5L616.5,577.5L614.5,578.5L614.5,579.5M771.5,571.5L769.5,572.5L769.5,573.5L769.5,574.5L769.5,575.5L771.5,576.5L773.5,577.5L775.5,577.5L776.5,578.5L777.5,580.5L777.5,582.5L776.5,583.5L774.5,584.5L771.5,584.5L769.5,583.5L768.5,582.5L768.5,580.5L769.5,578.5L770.5,577.5L772.5,577.5L774.5,576.5L776.5,575.5L776.5,574.5L776.5,573.5L776.5,572.5L774.5,571.5L772.5,571.5M131.5,556.5L131.5,546.5M124.5,536.5L125.5,538.5L126.5,540.5L130.5,540.5L131.5,540.5L135.5,540.5L136.5,538.5L137.5,536.5L137.5,535.5L136.5,533.5L135.5,532.5L131.5,531.5L130.5,531.5L126.5,532.5L125.5,533.5L124.5,535.5L124.5,535.5M136.5,526.5L136.5,527.5L137.5,526.5L137.5,526.5M124.5,514.5L124.5,520.5L130.5,521.5L129.5,520.5L128.5,518.5L128.5,516.5L129.5,514.5L130.5,513.5L132.5,512.5L133.5,512.5L135.5,513.5L136.5,514.5L137.5,516.5L137.5,518.5L136.5,520.5L136.5,521.5L136.5,521.5M124.5,472.5L125.5,474.5L126.5,475.5L130.5,476.5L131.5,476.5L135.5,475.5L136.5,474.5L137.5,472.5L137.5,471.5L136.5,469.5L135.5,468.5L131.5,467.5L130.5,467.5L126.5,468.5L125.5,469.5L124.5,471.5L124.5,471.5M124.5,419.5L125.5,420.5L126.5,422.5L130.5,422.5L131.5,422.5L135.5,422.5L136.5,420.5L137.5,419.5L137.5,417.5L136.5,415.5L135.5,414.5L131.5,414.5L130.5,414.5L126.5,414.5L125.5,415.5L124.5,417.5L124.5,418.5M136.5,409.5L137.5,409.5L136.5,408.5L136.5,408.5M124.5,396.5L124.5,402.5L130.5,403.5L129.5,402.5L128.5,400.5L128.5,398.5L129.5,397.5L130.5,395.5L132.5,395.5L133.5,395.5L135.5,395.5L136.5,397.5L137.5,398.5L137.5,400.5L136.5,402.5L136.5,403.5L136.5,403.5M126.5,348.5L126.5,347.5L124.5,345.5L136.5,345.5M126.5,295.5L126.5,294.5L124.5,292.5L136.5,292.5M136.5,284.5L137.5,284.5L136.5,283.5L136.5,283.5M124.5,271.5L124.5,277.5L130.5,278.5L129.5,277.5L128.5,275.5L128.5,273.5L129.5,272.5L130.5,270.5L132.5,270.5L133.5,270.5L135.5,270.5L136.5,272.5L137.5,273.5L137.5,275.5L136.5,277.5L136.5,278.5L136.5,278.5M405.5,609.5L405.5,615.5M405.5,612.5L406.5,611.5L407.5,610.5L408.5,609.5L408.5,609.5M428.5,604.5L420.5,618.5M442.5,606.5L438.5,615.5M442.5,606.5L446.5,615.5M439.5,613.5L443.5,613.5M448.5,609.5L448.5,615.5M448.5,611.5L450.5,610.5L451.5,609.5L452.5,609.5L453.5,610.5L454.5,611.5L454.5,615.5M464.5,609.5L464.5,617.5L463.5,618.5L463.5,619.5L461.5,619.5L460.5,619.5L460.5,619.5M464.5,611.5L463.5,610.5L461.5,609.5L460.5,609.5L459.5,610.5L458.5,611.5L457.5,612.5L457.5,613.5L458.5,615.5L459.5,616.5L460.5,616.5L461.5,616.5L463.5,616.5L463.5,616.5M473.5,611.5L472.5,610.5L471.5,609.5L469.5,609.5L468.5,610.5L467.5,611.5L468.5,612.5L469.5,612.5L471.5,613.5L472.5,613.5L473.5,614.5L473.5,615.5L472.5,616.5L471.5,616.5L469.5,616.5L468.5,616.5L468.5,616.5M477.5,606.5L477.5,614.5L477.5,616.5L478.5,616.5L478.5,616.5M475.5,609.5L478.5,609.5M482.5,609.5L482.5,615.5M482.5,612.5L483.5,611.5L484.5,610.5L485.5,609.5L485.5,609.5M491.5,609.5L490.5,610.5L489.5,611.5L488.5,612.5L488.5,613.5L489.5,615.5L490.5,616.5L491.5,616.5L493.5,616.5L494.5,616.5L495.5,615.5L495.5,613.5L495.5,612.5L495.5,611.5L494.5,610.5L493.5,609.5L492.5,609.5M499.5,609.5L499.5,615.5M499.5,611.5L500.5,610.5L501.5,609.5L503.5,609.5L504.5,610.5L504.5,611.5L504.5,615.5M504.5,611.5L506.5,610.5L507.5,609.5L508.5,609.5L509.5,610.5L510.5,611.5L510.5,615.5M519.5,611.5L519.5,610.5L517.5,609.5L515.5,609.5L514.5,610.5L513.5,611.5L514.5,612.5L515.5,612.5L517.5,613.5L519.5,613.5L519.5,614.5L519.5,615.5L519.5,616.5L517.5,616.5L515.5,616.5L514.5,616.5L514.5,616.5M84.5,528.5L93.5,528.5M84.5,528.5L84.5,524.5L84.5,523.5L85.5,522.5L86.5,521.5L88.5,521.5L90.5,521.5L92.5,521.5L93.5,522.5L94.5,523.5L94.5,524.5L94.5,527.5M82.5,514.5L83.5,515.5L84.5,516.5L86.5,517.5L89.5,517.5L91.5,517.5L93.5,517.5L95.5,516.5L96.5,515.5L96.5,515.5M87.5,510.5L93.5,510.5M90.5,510.5L89.5,510.5L88.5,509.5L87.5,508.5L87.5,507.5M82.5,504.5L83.5,503.5L84.5,502.5L86.5,501.5L89.5,501.5L91.5,501.5L93.5,501.5L95.5,502.5L96.5,503.5L96.5,503.5M82.5,481.5L96.5,489.5M84.5,470.5L93.5,470.5M89.5,470.5L88.5,469.5L87.5,468.5L87.5,466.5L88.5,465.5L89.5,464.5L90.5,464.5L91.5,464.5L93.5,464.5L94.5,465.5L94.5,466.5L94.5,468.5L94.5,469.5L94.5,469.5M87.5,455.5L93.5,455.5M89.5,455.5L88.5,456.5L87.5,457.5L87.5,458.5L88.5,459.5L89.5,460.5L90.5,461.5L91.5,461.5L93.5,460.5L94.5,459.5L94.5,458.5L94.5,457.5L94.5,456.5L94.5,456.5M87.5,451.5L93.5,451.5M90.5,451.5L89.5,450.5L88.5,449.5L87.5,448.5L87.5,448.5M87.5,444.5L93.5,444.5M89.5,444.5L88.5,443.5L87.5,442.5L87.5,440.5L88.5,439.5L89.5,439.5L93.5,439.5M89.5,430.5L88.5,430.5L87.5,432.5L87.5,433.5L88.5,435.5L89.5,435.5L90.5,435.5L90.5,434.5L91.5,431.5L91.5,430.5L92.5,430.5L93.5,430.5L94.5,430.5L94.5,432.5L94.5,433.5L94.5,435.5L94.5,435.5M87.5,418.5L96.5,418.5M89.5,418.5L88.5,417.5L87.5,416.5L87.5,415.5L88.5,414.5L89.5,413.5L90.5,412.5L91.5,412.5L93.5,413.5L94.5,414.5L94.5,415.5L94.5,416.5L94.5,417.5L94.5,417.5M90.5,409.5L90.5,403.5L89.5,403.5L88.5,403.5L88.5,404.5L87.5,405.5L87.5,407.5L88.5,408.5L89.5,409.5L90.5,409.5L91.5,409.5L93.5,409.5L94.5,408.5L94.5,407.5L94.5,405.5L94.5,404.5L94.5,404.5M87.5,399.5L93.5,399.5M90.5,399.5L89.5,399.5L88.5,398.5L87.5,397.5L87.5,396.5M84.5,382.5L93.5,386.5M84.5,382.5L93.5,378.5M91.5,385.5L91.5,381.5M87.5,376.5L93.5,376.5M89.5,376.5L88.5,374.5L87.5,373.5L87.5,372.5L88.5,371.5L89.5,370.5L93.5,370.5M87.5,361.5L95.5,361.5L96.5,361.5L97.5,362.5L97.5,363.5L97.5,364.5L97.5,364.5M89.5,361.5L88.5,362.5L87.5,363.5L87.5,364.5L88.5,365.5L89.5,366.5L90.5,367.5L91.5,367.5L93.5,366.5L94.5,365.5L94.5,364.5L94.5,363.5L94.5,362.5L94.5,362.5M89.5,352.5L88.5,352.5L87.5,354.5L87.5,355.5L88.5,357.5L89.5,357.5L90.5,357.5L90.5,356.5L91.5,353.5L91.5,352.5L92.5,352.5L93.5,352.5L94.5,352.5L94.5,354.5L94.5,355.5L94.5,357.5L94.5,357.5M84.5,348.5L92.5,348.5L94.5,347.5L94.5,346.5L94.5,346.5M87.5,349.5L87.5,347.5M87.5,342.5L93.5,342.5M90.5,342.5L89.5,342.5L88.5,341.5L87.5,340.5L87.5,339.5M87.5,334.5L88.5,335.5L89.5,336.5L90.5,336.5L91.5,336.5L93.5,336.5L94.5,335.5L94.5,334.5L94.5,332.5L94.5,331.5L93.5,330.5L91.5,330.5L90.5,330.5L89.5,330.5L88.5,331.5L87.5,332.5L87.5,333.5M87.5,326.5L93.5,326.5M89.5,326.5L88.5,325.5L87.5,324.5L87.5,322.5L88.5,321.5L89.5,321.5L93.5,321.5M89.5,321.5L88.5,319.5L87.5,318.5L87.5,317.5L88.5,316.5L89.5,315.5L93.5,315.5M87.5,309.5L92.5,309.5M88.5,312.5L90.5,308.5M88.5,307.5L90.5,311.5M87.5,301.5L92.5,301.5M88.5,304.5L90.5,300.5M88.5,299.5L90.5,303.5M86.5,295.5L85.5,295.5L84.5,294.5L84.5,293.5L84.5,291.5L84.5,290.5L85.5,290.5L86.5,289.5L87.5,289.5L88.5,290.5L89.5,291.5L94.5,296.5L94.5,290.5M84.5,150.5L84.5,179.5M114.5,154.5L111.5,151.5L107.5,150.5L101.5,150.5L97.5,151.5L94.5,154.5L94.5,157.5L95.5,160.5L97.5,161.5L100.5,163.5L108.5,166.5L111.5,167.5L113.5,169.5L114.5,171.5L114.5,176.5L111.5,179.5L107.5,180.5L101.5,180.5L97.5,179.5L95.5,177.5M124.5,150.5L124.5,179.5M154.5,154.5L151.5,151.5L147.5,150.5L141.5,150.5L137.5,151.5L134.5,154.5L134.5,157.5L135.5,160.5L137.5,161.5L140.5,163.5L148.5,166.5L151.5,167.5L153.5,169.5L154.5,171.5L154.5,176.5L151.5,179.5L147.5,180.5L141.5,180.5L137.5,179.5L135.5,177.5M226.5,125.5L226.5,130.5M228.5,127.5L228.5,130.5M228.5,128.5L229.5,127.5L230.5,127.5L231.5,127.5L232.5,128.5L232.5,130.5M237.5,128.5L237.5,127.5L236.5,127.5L235.5,127.5L234.5,127.5L234.5,128.5L235.5,129.5L236.5,129.5L237.5,129.5L237.5,130.5L237.5,131.5L236.5,131.5L235.5,131.5L234.5,131.5L234.5,131.5M240.5,125.5L240.5,130.5L240.5,131.5L240.5,131.5M239.5,127.5L240.5,127.5M243.5,127.5L243.5,130.5M243.5,129.5L243.5,128.5L244.5,127.5L245.5,127.5L245.5,127.5M247.5,127.5L247.5,130.5L247.5,131.5L248.5,131.5L249.5,131.5L250.5,131.5L250.5,131.5M250.5,127.5L250.5,130.5M253.5,127.5L253.5,130.5M253.5,128.5L254.5,127.5L255.5,127.5L256.5,127.5L256.5,128.5L256.5,130.5M256.5,128.5L257.5,127.5L258.5,127.5L259.5,127.5L260.5,128.5L260.5,130.5M262.5,129.5L265.5,129.5L265.5,128.5L265.5,127.5L264.5,127.5L263.5,127.5L262.5,128.5L262.5,129.5L262.5,130.5L263.5,131.5L264.5,131.5L265.5,131.5L265.5,131.5M268.5,127.5L268.5,130.5M268.5,128.5L268.5,127.5L269.5,127.5L270.5,127.5L271.5,127.5L271.5,128.5L271.5,130.5M274.5,125.5L274.5,130.5L274.5,131.5L274.5,131.5M273.5,127.5L274.5,127.5M277.5,127.5L277.5,128.5L278.5,127.5L278.5,127.5M277.5,130.5L277.5,131.5L278.5,131.5L278.5,131.5M289.5,126.5L288.5,125.5L286.5,125.5L285.5,126.5L285.5,127.5L285.5,129.5L285.5,130.5L286.5,131.5L288.5,131.5L289.5,130.5L289.5,130.5M288.5,129.5L288.5,129.5M291.5,125.5L291.5,130.5M291.5,125.5L294.5,125.5M291.5,128.5L293.5,128.5M291.5,131.5L294.5,131.5M297.5,125.5L297.5,130.5M297.5,125.5L300.5,130.5M302.5,125.5L300.5,130.5M302.5,125.5L302.5,130.5M226.5,144.5L226.5,149.5M226.5,144.5L229.5,144.5L230.5,144.5L230.5,145.5L230.5,146.5L230.5,147.5L229.5,147.5L227.5,147.5M228.5,147.5L229.5,149.5M232.5,146.5L232.5,149.5L233.5,150.5L234.5,150.5L235.5,150.5L235.5,150.5M236.5,146.5L236.5,149.5M238.5,146.5L238.5,149.5M238.5,147.5L239.5,146.5L240.5,146.5L241.5,146.5L241.5,147.5L241.5,149.5M249.5,146.5L249.5,149.5M249.5,147.5L249.5,146.5L250.5,146.5L251.5,146.5L252.5,146.5L252.5,147.5L252.5,149.5M254.5,146.5L254.5,149.5L255.5,150.5L256.5,150.5L257.5,150.5L257.5,150.5M258.5,146.5L258.5,149.5M260.5,146.5L260.5,149.5M260.5,147.5L261.5,146.5L262.5,146.5L263.5,146.5L263.5,147.5L263.5,149.5M263.5,147.5L264.5,146.5L265.5,146.5L266.5,146.5L267.5,147.5L267.5,149.5M269.5,144.5L269.5,149.5M269.5,147.5L270.5,146.5L271.5,146.5L272.5,146.5L272.5,147.5L273.5,148.5L272.5,149.5L272.5,150.5L271.5,150.5L270.5,150.5L270.5,150.5M274.5,148.5L278.5,148.5L278.5,147.5L277.5,146.5L276.5,146.5L275.5,146.5L275.5,147.5L274.5,148.5L275.5,149.5L275.5,150.5L276.5,150.5L277.5,150.5L277.5,150.5M280.5,146.5L280.5,149.5M280.5,148.5L280.5,147.5L281.5,146.5L281.5,146.5M284.5,146.5L284.5,147.5L285.5,146.5L285.5,146.5M284.5,149.5L284.5,150.5L285.5,150.5L285.5,150.5M294.5,144.5L291.5,148.5L295.5,148.5M294.5,144.5L294.5,149.5M301.5,145.5L301.5,144.5L300.5,144.5L299.5,144.5L298.5,145.5L298.5,147.5L298.5,148.5L298.5,149.5L299.5,150.5L300.5,150.5L301.5,150.5L301.5,149.5L302.5,148.5L301.5,147.5L300.5,146.5L299.5,147.5L298.5,147.5L298.5,147.5M307.5,144.5L304.5,144.5L304.5,147.5L304.5,146.5L305.5,146.5L306.5,146.5L307.5,146.5L307.5,147.5L308.5,148.5L307.5,149.5L307.5,150.5L306.5,150.5L305.5,150.5L304.5,150.5L304.5,149.5L304.5,149.5M313.5,144.5L310.5,144.5L310.5,147.5L310.5,146.5L311.5,146.5L312.5,146.5L313.5,146.5L313.5,147.5L314.5,148.5L313.5,149.5L313.5,150.5L312.5,150.5L311.5,150.5L310.5,150.5L310.5,149.5L310.5,149.5M318.5,144.5L315.5,148.5L319.5,148.5M318.5,144.5L318.5,149.5M230.5,165.5L230.5,164.5L229.5,164.5L228.5,164.5L227.5,164.5L226.5,165.5L226.5,166.5L227.5,166.5L227.5,167.5L229.5,167.5L230.5,167.5L230.5,168.5L230.5,169.5L230.5,170.5L229.5,170.5L228.5,170.5L227.5,170.5L227.5,170.5M232.5,166.5L232.5,171.5M232.5,167.5L233.5,166.5L234.5,166.5L235.5,166.5L236.5,167.5L236.5,168.5L236.5,169.5L235.5,170.5L234.5,170.5L233.5,170.5L233.5,170.5M238.5,168.5L241.5,168.5L241.5,167.5L241.5,166.5L240.5,166.5L239.5,166.5L238.5,167.5L238.5,168.5L238.5,169.5L239.5,170.5L240.5,170.5L241.5,170.5L241.5,170.5M247.5,167.5L246.5,166.5L245.5,166.5L244.5,166.5L244.5,167.5L243.5,168.5L244.5,169.5L244.5,170.5L245.5,170.5L246.5,170.5L246.5,170.5M249.5,164.5L249.5,169.5L250.5,170.5L250.5,170.5M248.5,166.5L250.5,166.5M253.5,166.5L253.5,169.5M253.5,168.5L253.5,167.5L254.5,166.5L254.5,166.5M257.5,166.5L257.5,169.5L257.5,170.5L258.5,170.5L259.5,170.5L259.5,170.5M260.5,166.5L260.5,169.5M262.5,166.5L262.5,169.5M262.5,167.5L263.5,166.5L264.5,166.5L265.5,166.5L266.5,167.5L266.5,169.5M266.5,167.5L267.5,166.5L268.5,166.5L269.5,166.5L269.5,167.5L269.5,169.5M272.5,166.5L271.5,166.5L272.5,167.5L272.5,167.5M272.5,169.5L271.5,170.5L272.5,170.5L272.5,170.5M280.5,164.5L283.5,164.5L281.5,166.5L282.5,166.5L283.5,167.5L283.5,168.5L283.5,169.5L282.5,170.5L281.5,170.5L280.5,170.5L280.5,170.5M287.5,164.5L286.5,164.5L285.5,165.5L285.5,167.5L285.5,169.5L286.5,170.5L287.5,170.5L288.5,170.5L289.5,169.5L289.5,167.5L289.5,165.5L288.5,164.5L288.5,164.5M295.5,164.5L292.5,164.5L291.5,167.5L292.5,166.5L293.5,166.5L294.5,166.5L295.5,166.5L295.5,167.5L295.5,168.5L295.5,169.5L295.5,170.5L294.5,170.5L293.5,170.5L292.5,170.5L292.5,170.5M298.5,165.5L299.5,165.5L300.5,164.5L300.5,169.5M308.5,167.5L313.5,167.5M325.5,164.5L321.5,164.5L321.5,167.5L321.5,166.5L322.5,166.5L323.5,166.5L324.5,166.5L325.5,167.5L325.5,168.5L325.5,169.5L324.5,170.5L323.5,170.5L322.5,170.5L321.5,170.5L321.5,170.5M327.5,165.5L328.5,165.5L328.5,164.5L330.5,164.5L331.5,165.5L331.5,166.5L330.5,167.5L327.5,170.5L330.5,170.5M335.5,164.5L334.5,164.5L333.5,165.5L333.5,167.5L333.5,169.5L334.5,170.5L335.5,170.5L336.5,170.5L337.5,169.5L337.5,167.5L337.5,165.5L336.5,164.5L336.5,164.5M343.5,166.5L343.5,167.5L342.5,167.5L341.5,168.5L340.5,167.5L339.5,167.5L339.5,166.5L339.5,165.5L340.5,164.5L341.5,164.5L342.5,164.5L343.5,165.5L343.5,166.5L343.5,167.5L343.5,169.5L342.5,170.5L341.5,170.5L340.5,170.5L340.5,170.5M226.5,196.5L226.5,201.5M226.5,202.5L229.5,202.5M232.5,198.5L231.5,199.5L231.5,200.5L231.5,201.5L232.5,202.5L233.5,202.5L234.5,202.5L234.5,201.5L235.5,200.5L234.5,199.5L234.5,198.5L233.5,198.5L233.5,198.5M240.5,199.5L239.5,198.5L238.5,198.5L237.5,198.5L237.5,199.5L236.5,200.5L237.5,201.5L237.5,202.5L238.5,202.5L239.5,202.5L239.5,202.5M245.5,198.5L245.5,201.5M245.5,199.5L245.5,198.5L244.5,198.5L243.5,198.5L242.5,199.5L242.5,200.5L242.5,201.5L243.5,202.5L244.5,202.5L245.5,202.5L245.5,202.5M248.5,196.5L248.5,201.5L248.5,202.5L249.5,202.5L249.5,202.5M247.5,198.5L248.5,198.5M251.5,196.5L252.5,196.5L252.5,196.5M251.5,198.5L251.5,201.5M255.5,198.5L254.5,198.5L254.5,199.5L253.5,200.5L254.5,201.5L254.5,202.5L255.5,202.5L256.5,202.5L257.5,201.5L257.5,200.5L257.5,199.5L256.5,198.5L256.5,198.5M259.5,198.5L259.5,201.5M259.5,199.5L260.5,198.5L261.5,198.5L262.5,198.5L263.5,199.5L263.5,201.5M265.5,198.5L265.5,199.5L266.5,198.5L266.5,198.5M265.5,201.5L265.5,202.5L266.5,202.5L266.5,202.5M273.5,198.5L275.5,201.5M276.5,198.5L274.5,201.5M278.5,198.5L278.5,201.5M278.5,200.5L278.5,199.5L279.5,198.5L279.5,198.5M282.5,200.5L285.5,200.5L285.5,199.5L285.5,198.5L284.5,198.5L283.5,198.5L282.5,198.5L282.5,199.5L282.5,200.5L282.5,201.5L282.5,202.5L283.5,202.5L284.5,202.5L285.5,202.5L285.5,202.5M287.5,198.5L287.5,201.5M287.5,199.5L288.5,198.5L289.5,198.5L290.5,198.5L290.5,199.5L290.5,201.5M290.5,199.5L291.5,198.5L292.5,198.5L293.5,198.5L294.5,199.5L294.5,201.5M299.5,196.5L296.5,200.5L299.5,200.5M299.5,196.5L299.5,201.5M306.5,197.5L305.5,196.5L304.5,196.5L303.5,196.5L302.5,197.5L302.5,199.5L302.5,200.5L302.5,201.5L303.5,202.5L304.5,202.5L305.5,202.5L306.5,201.5L306.5,200.5L306.5,199.5L305.5,199.5L304.5,198.5L303.5,199.5L302.5,199.5L302.5,199.5M311.5,196.5L308.5,196.5L308.5,199.5L308.5,198.5L309.5,198.5L310.5,198.5L311.5,198.5L312.5,199.5L312.5,200.5L312.5,201.5L311.5,202.5L310.5,202.5L309.5,202.5L308.5,202.5L308.5,202.5M317.5,196.5L314.5,196.5L314.5,199.5L314.5,198.5L315.5,198.5L316.5,198.5L317.5,198.5L318.5,199.5L318.5,200.5L318.5,201.5L317.5,202.5L316.5,202.5L315.5,202.5L314.5,202.5L314.5,202.5M323.5,196.5L320.5,200.5L323.5,200.5M323.5,196.5L323.5,201.5M326.5,201.5L326.5,202.5L327.5,202.5L327.5,202.5M329.5,198.5L329.5,201.5M329.5,200.5L329.5,199.5L330.5,198.5L330.5,198.5M336.5,198.5L336.5,201.5M336.5,199.5L336.5,198.5L335.5,198.5L334.5,198.5L333.5,198.5L333.5,199.5L333.5,200.5L333.5,201.5L333.5,202.5L334.5,202.5L335.5,202.5L336.5,202.5L336.5,202.5M338.5,198.5L339.5,201.5M341.5,198.5L340.5,201.5M341.5,198.5L342.5,201.5M343.5,198.5L342.5,201.5M455.5,125.5L455.5,129.5L455.5,130.5L456.5,131.5L457.5,131.5L458.5,131.5L459.5,130.5L459.5,129.5L459.5,126.5M465.5,128.5L464.5,127.5L463.5,127.5L462.5,127.5L461.5,128.5L462.5,128.5L462.5,129.5L464.5,129.5L465.5,130.5L464.5,131.5L463.5,131.5L462.5,131.5L462.5,131.5M466.5,129.5L470.5,129.5L470.5,128.5L469.5,127.5L468.5,127.5L467.5,127.5L467.5,128.5L466.5,129.5L467.5,130.5L467.5,131.5L468.5,131.5L469.5,131.5L469.5,131.5M472.5,127.5L472.5,130.5M472.5,129.5L472.5,128.5L473.5,127.5L474.5,127.5L474.5,127.5M477.5,131.5L476.5,131.5L476.5,130.5L477.5,131.5L477.5,131.5M484.5,125.5L484.5,130.5M488.5,125.5L488.5,130.5M484.5,128.5L487.5,128.5M492.5,127.5L491.5,127.5L491.5,128.5L490.5,129.5L491.5,130.5L491.5,131.5L492.5,131.5L493.5,131.5L494.5,130.5L494.5,129.5L494.5,128.5L493.5,127.5L493.5,127.5M496.5,125.5L496.5,130.5M499.5,125.5L499.5,130.5M504.5,127.5L504.5,130.5M504.5,128.5L504.5,127.5L503.5,127.5L502.5,127.5L501.5,128.5L501.5,129.5L501.5,130.5L502.5,131.5L503.5,131.5L504.5,131.5L504.5,131.5M507.5,127.5L507.5,130.5M507.5,128.5L508.5,127.5L509.5,127.5L510.5,127.5L510.5,128.5L510.5,130.5M516.5,125.5L516.5,130.5M516.5,128.5L515.5,127.5L514.5,127.5L513.5,127.5L513.5,128.5L512.5,129.5L513.5,130.5L513.5,131.5L514.5,131.5L515.5,131.5L515.5,131.5M519.5,131.5L518.5,131.5L519.5,130.5L519.5,131.5L519.5,132.5L519.5,132.5M521.5,125.5L521.5,130.5M521.5,131.5L524.5,131.5M530.5,127.5L530.5,130.5M530.5,128.5L529.5,127.5L528.5,127.5L527.5,127.5L526.5,128.5L526.5,129.5L526.5,130.5L527.5,131.5L528.5,131.5L529.5,131.5L529.5,131.5M535.5,127.5L535.5,130.5M535.5,128.5L535.5,127.5L534.5,127.5L533.5,127.5L532.5,128.5L532.5,129.5L532.5,130.5L533.5,131.5L534.5,131.5L535.5,131.5L535.5,131.5M538.5,127.5L538.5,130.5M538.5,129.5L538.5,128.5L539.5,127.5L539.5,127.5M543.5,127.5L542.5,127.5L542.5,128.5L541.5,129.5L542.5,130.5L542.5,131.5L543.5,131.5L544.5,131.5L545.5,130.5L545.5,129.5L545.5,128.5L544.5,127.5L544.5,127.5M551.5,125.5L551.5,130.5M551.5,128.5L550.5,127.5L549.5,127.5L548.5,127.5L547.5,128.5L547.5,129.5L547.5,130.5L548.5,131.5L549.5,131.5L550.5,131.5L550.5,131.5M553.5,127.5L553.5,132.5M553.5,128.5L554.5,127.5L555.5,127.5L556.5,127.5L556.5,128.5L557.5,129.5L556.5,130.5L556.5,131.5L555.5,131.5L554.5,131.5L554.5,131.5M559.5,125.5L559.5,130.5M559.5,128.5L560.5,127.5L561.5,127.5L562.5,127.5L562.5,128.5L562.5,130.5M566.5,127.5L565.5,127.5L565.5,128.5L564.5,129.5L565.5,130.5L565.5,131.5L566.5,131.5L567.5,131.5L568.5,130.5L568.5,129.5L568.5,128.5L567.5,127.5L567.5,127.5M570.5,127.5L570.5,130.5M570.5,128.5L571.5,127.5L572.5,127.5L573.5,127.5L574.5,128.5L574.5,130.5M577.5,131.5L576.5,131.5L576.5,130.5L577.5,131.5L577.5,131.5M581.5,125.5L579.5,130.5M581.5,125.5L583.5,130.5M579.5,129.5L581.5,129.5M455.5,144.5L455.5,149.5M455.5,144.5L458.5,144.5L459.5,144.5L459.5,145.5L459.5,146.5L459.5,147.5L458.5,147.5L456.5,147.5M457.5,147.5L458.5,149.5M461.5,146.5L461.5,149.5L462.5,150.5L463.5,150.5L464.5,150.5L464.5,150.5M465.5,146.5L465.5,149.5M467.5,146.5L467.5,149.5M467.5,147.5L468.5,146.5L469.5,146.5L470.5,146.5L470.5,147.5L470.5,149.5M481.5,147.5L480.5,146.5L479.5,146.5L478.5,146.5L477.5,147.5L478.5,147.5L478.5,148.5L480.5,148.5L481.5,149.5L480.5,150.5L479.5,150.5L478.5,150.5L478.5,150.5M483.5,144.5L483.5,149.5L483.5,150.5L484.5,150.5L484.5,150.5M482.5,146.5L483.5,146.5M490.5,146.5L490.5,149.5M490.5,147.5L489.5,146.5L488.5,146.5L487.5,146.5L486.5,147.5L486.5,148.5L486.5,149.5L487.5,150.5L488.5,150.5L489.5,150.5L489.5,150.5M492.5,146.5L492.5,149.5M492.5,148.5L493.5,147.5L493.5,146.5L494.5,146.5L494.5,146.5M496.5,144.5L496.5,149.5L497.5,150.5L497.5,150.5M496.5,146.5L497.5,146.5M505.5,144.5L505.5,149.5L505.5,150.5L505.5,150.5M504.5,146.5L505.5,146.5M508.5,144.5L509.5,144.5L509.5,144.5M508.5,146.5L508.5,149.5M511.5,146.5L511.5,149.5M511.5,147.5L512.5,146.5L513.5,146.5L514.5,146.5L514.5,147.5L514.5,149.5M514.5,147.5L515.5,146.5L516.5,146.5L517.5,146.5L517.5,147.5L517.5,149.5M520.5,148.5L523.5,148.5L523.5,147.5L523.5,146.5L522.5,146.5L521.5,146.5L520.5,146.5L520.5,147.5L520.5,148.5L520.5,149.5L520.5,150.5L521.5,150.5L522.5,150.5L523.5,150.5L523.5,150.5M526.5,146.5L525.5,146.5L526.5,147.5L526.5,147.5M526.5,149.5L525.5,150.5L526.5,150.5L526.5,150.5M534.5,145.5L535.5,144.5L535.5,149.5M543.5,144.5L539.5,144.5L539.5,147.5L539.5,146.5L540.5,146.5L541.5,146.5L542.5,146.5L543.5,147.5L543.5,148.5L543.5,149.5L542.5,150.5L541.5,150.5L540.5,150.5L539.5,150.5L539.5,150.5M545.5,147.5L550.5,147.5M556.5,144.5L556.5,149.5L555.5,149.5L555.5,150.5L554.5,150.5L553.5,150.5L553.5,149.5L553.5,149.5M558.5,144.5L558.5,148.5L558.5,149.5L559.5,150.5L560.5,150.5L561.5,150.5L562.5,149.5L562.5,148.5L562.5,145.5M565.5,144.5L565.5,149.5M565.5,150.5L567.5,150.5M570.5,147.5L574.5,147.5M578.5,145.5L578.5,144.5L579.5,144.5L580.5,144.5L581.5,144.5L581.5,145.5L581.5,146.5L580.5,147.5L577.5,150.5L581.5,150.5M585.5,144.5L584.5,144.5L584.5,145.5L583.5,147.5L584.5,149.5L584.5,150.5L585.5,150.5L586.5,150.5L587.5,150.5L587.5,149.5L588.5,147.5L587.5,145.5L587.5,144.5L586.5,144.5L586.5,144.5M591.5,144.5L590.5,144.5L590.5,145.5L589.5,147.5L590.5,149.5L590.5,150.5L591.5,150.5L592.5,150.5L593.5,150.5L593.5,149.5L594.5,147.5L593.5,145.5L593.5,144.5L592.5,144.5L592.5,144.5M599.5,146.5L599.5,147.5L598.5,148.5L597.5,148.5L596.5,147.5L596.5,146.5L596.5,145.5L596.5,144.5L597.5,144.5L598.5,144.5L599.5,144.5L599.5,145.5L599.5,146.5L599.5,147.5L599.5,149.5L599.5,150.5L598.5,150.5L597.5,150.5L596.5,150.5L596.5,150.5M608.5,144.5L607.5,144.5L607.5,145.5L606.5,147.5L607.5,149.5L607.5,150.5L608.5,150.5L609.5,150.5L610.5,150.5L610.5,149.5L611.5,147.5L610.5,145.5L610.5,144.5L609.5,144.5L609.5,144.5M616.5,144.5L612.5,148.5L616.5,148.5M616.5,144.5L616.5,149.5M619.5,146.5L619.5,147.5L619.5,147.5M619.5,149.5L619.5,150.5L619.5,150.5M622.5,145.5L623.5,145.5L624.5,144.5L624.5,149.5M632.5,146.5L631.5,147.5L630.5,148.5L629.5,148.5L629.5,147.5L628.5,147.5L628.5,146.5L628.5,145.5L629.5,144.5L630.5,144.5L631.5,144.5L631.5,145.5L632.5,146.5L632.5,147.5L631.5,149.5L631.5,150.5L630.5,150.5L629.5,150.5L628.5,150.5L628.5,150.5M634.5,146.5L634.5,147.5L635.5,146.5L635.5,146.5M634.5,149.5L634.5,150.5L635.5,150.5L635.5,150.5M637.5,144.5L641.5,144.5L639.5,146.5L640.5,146.5L640.5,147.5L641.5,147.5L641.5,148.5L641.5,149.5L640.5,150.5L639.5,150.5L638.5,150.5L637.5,150.5L637.5,150.5M647.5,145.5L646.5,144.5L645.5,144.5L644.5,144.5L643.5,145.5L643.5,147.5L643.5,148.5L643.5,149.5L644.5,150.5L645.5,150.5L646.5,150.5L647.5,149.5L647.5,148.5L647.5,147.5L646.5,147.5L645.5,146.5L644.5,147.5L643.5,147.5L643.5,147.5M455.5,163.5L455.5,168.5M455.5,163.5L458.5,163.5L459.5,163.5L459.5,164.5L459.5,165.5L459.5,166.5L458.5,166.5L456.5,166.5M461.5,163.5L461.5,168.5M465.5,165.5L464.5,165.5L464.5,166.5L463.5,167.5L464.5,168.5L464.5,169.5L465.5,169.5L466.5,169.5L467.5,168.5L467.5,167.5L467.5,166.5L466.5,165.5L466.5,165.5M470.5,163.5L470.5,168.5L470.5,169.5L470.5,169.5M469.5,165.5L470.5,165.5M481.5,163.5L481.5,168.5M481.5,166.5L481.5,165.5L480.5,165.5L479.5,165.5L478.5,165.5L478.5,166.5L478.5,167.5L478.5,168.5L478.5,169.5L479.5,169.5L480.5,169.5L481.5,169.5L481.5,169.5M487.5,165.5L487.5,168.5M487.5,166.5L486.5,165.5L485.5,165.5L484.5,165.5L484.5,166.5L483.5,167.5L484.5,168.5L484.5,169.5L485.5,169.5L486.5,169.5L486.5,169.5M490.5,163.5L490.5,168.5L490.5,169.5L490.5,169.5M489.5,165.5L490.5,165.5M493.5,167.5L496.5,167.5L496.5,166.5L496.5,165.5L495.5,165.5L494.5,165.5L493.5,166.5L493.5,167.5L493.5,168.5L494.5,169.5L495.5,169.5L496.5,169.5L496.5,169.5M499.5,165.5L498.5,165.5L499.5,166.5L499.5,166.5M499.5,168.5L498.5,169.5L499.5,169.5L499.5,169.5M508.5,163.5L507.5,163.5L506.5,164.5L506.5,166.5L506.5,168.5L507.5,169.5L508.5,169.5L509.5,169.5L510.5,168.5L510.5,166.5L510.5,164.5L509.5,163.5L509.5,163.5M516.5,163.5L513.5,163.5L512.5,166.5L513.5,165.5L514.5,165.5L515.5,165.5L516.5,166.5L516.5,167.5L516.5,168.5L515.5,169.5L514.5,169.5L513.5,169.5L513.5,169.5M518.5,166.5L523.5,166.5M528.5,163.5L528.5,168.5L528.5,169.5L527.5,169.5L526.5,169.5L526.5,168.5L525.5,168.5L525.5,168.5M534.5,165.5L534.5,168.5M534.5,166.5L534.5,165.5L533.5,165.5L532.5,165.5L531.5,165.5L531.5,166.5L531.5,167.5L531.5,168.5L531.5,169.5L532.5,169.5L533.5,169.5L534.5,169.5L534.5,169.5M537.5,165.5L537.5,168.5M537.5,166.5L537.5,165.5L538.5,165.5L539.5,165.5L540.5,165.5L540.5,166.5L540.5,168.5M542.5,166.5L547.5,166.5M550.5,164.5L551.5,163.5L553.5,163.5L553.5,164.5L554.5,164.5L554.5,165.5L553.5,165.5L553.5,166.5L550.5,169.5L553.5,169.5M558.5,163.5L557.5,163.5L556.5,164.5L556.5,166.5L556.5,168.5L557.5,169.5L558.5,169.5L559.5,169.5L560.5,168.5L560.5,166.5L560.5,164.5L559.5,163.5L559.5,163.5M563.5,164.5L564.5,163.5L564.5,168.5M570.5,163.5L569.5,163.5L568.5,164.5L568.5,166.5L568.5,168.5L569.5,169.5L570.5,169.5L571.5,169.5L572.5,168.5L572.5,166.5L572.5,164.5L571.5,163.5L571.5,163.5M580.5,164.5L581.5,163.5L581.5,168.5M588.5,163.5L585.5,167.5L588.5,167.5M588.5,163.5L588.5,168.5M591.5,165.5L591.5,166.5L592.5,165.5L592.5,165.5M591.5,168.5L591.5,169.5L592.5,169.5L592.5,169.5M596.5,163.5L595.5,163.5L594.5,164.5L594.5,166.5L594.5,168.5L595.5,169.5L596.5,169.5L597.5,169.5L598.5,168.5L598.5,166.5L598.5,164.5L597.5,163.5L597.5,163.5M601.5,163.5L600.5,163.5L600.5,164.5L600.5,165.5L601.5,165.5L602.5,166.5L603.5,166.5L604.5,166.5L604.5,167.5L604.5,168.5L603.5,169.5L601.5,169.5L600.5,169.5L600.5,168.5L600.5,167.5L600.5,166.5L601.5,166.5L602.5,166.5L603.5,165.5L604.5,164.5L603.5,163.5L602.5,163.5M606.5,165.5L606.5,166.5L607.5,165.5L607.5,165.5M606.5,168.5L606.5,169.5L607.5,169.5L607.5,169.5M609.5,163.5L613.5,163.5L611.5,165.5L612.5,165.5L612.5,166.5L613.5,166.5L613.5,167.5L613.5,168.5L612.5,169.5L611.5,169.5L610.5,169.5L609.5,169.5L609.5,169.5M618.5,163.5L615.5,167.5L618.5,167.5M618.5,163.5L618.5,168.5M624.5,164.5L624.5,168.5M621.5,166.5L626.5,166.5M631.5,163.5L630.5,163.5L629.5,164.5L629.5,166.5L629.5,168.5L630.5,169.5L631.5,169.5L632.5,169.5L633.5,168.5L633.5,166.5L633.5,164.5L632.5,163.5L632.5,163.5M636.5,164.5L637.5,163.5L637.5,168.5M643.5,163.5L642.5,163.5L641.5,164.5L641.5,166.5L641.5,168.5L642.5,169.5L643.5,169.5L644.5,169.5L645.5,168.5L645.5,166.5L645.5,164.5L644.5,163.5L644.5,163.5M649.5,163.5L648.5,163.5L647.5,164.5L647.5,166.5L647.5,168.5L648.5,169.5L649.5,169.5L650.5,169.5L651.5,168.5L651.5,166.5L651.5,164.5L650.5,163.5L650.5,163.5M459.5,182.5L459.5,181.5L458.5,181.5L457.5,181.5L456.5,181.5L456.5,182.5L455.5,182.5L455.5,183.5L455.5,185.5L455.5,186.5L456.5,186.5L456.5,187.5L457.5,187.5L458.5,187.5L459.5,187.5L459.5,186.5L459.5,186.5M458.5,185.5L458.5,185.5M462.5,183.5L462.5,186.5M462.5,185.5L462.5,184.5L462.5,183.5L463.5,183.5L463.5,183.5M467.5,183.5L466.5,183.5L465.5,184.5L465.5,185.5L465.5,186.5L466.5,187.5L467.5,187.5L468.5,187.5L469.5,186.5L469.5,185.5L469.5,184.5L468.5,183.5L468.5,183.5M471.5,183.5L471.5,186.5L471.5,187.5L472.5,187.5L473.5,187.5L474.5,187.5L474.5,187.5M474.5,183.5L474.5,186.5M477.5,183.5L477.5,188.5M477.5,184.5L477.5,183.5L478.5,183.5L479.5,183.5L480.5,183.5L480.5,184.5L480.5,185.5L480.5,186.5L480.5,187.5L479.5,187.5L478.5,187.5L477.5,187.5L477.5,187.5M482.5,181.5L483.5,181.5L483.5,181.5M483.5,183.5L483.5,186.5M485.5,183.5L485.5,186.5M485.5,184.5L486.5,183.5L487.5,183.5L488.5,183.5L488.5,184.5L488.5,186.5M494.5,183.5L494.5,188.5L493.5,189.5L492.5,189.5L492.5,189.5M494.5,184.5L493.5,183.5L492.5,183.5L491.5,183.5L491.5,184.5L490.5,185.5L491.5,186.5L491.5,187.5L492.5,187.5L493.5,187.5L493.5,187.5M497.5,183.5L496.5,183.5L497.5,184.5L497.5,184.5M497.5,186.5L496.5,187.5L497.5,187.5L497.5,187.5M506.5,181.5L505.5,181.5L504.5,182.5L504.5,184.5L504.5,186.5L505.5,187.5L506.5,187.5L507.5,187.5L508.5,186.5L508.5,184.5L508.5,182.5L507.5,181.5L507.5,181.5"/>
 </g>
</svg>
<!-- status bar -->
<div class="a" style="left:4px;top:652px;width:952px;height:18px;background:#ece9d8"></div>
<svg class="a" style="left:0;top:650px" width="960" height="20" viewBox="0 650 960 20" font-family="Liberation Sans" fill="#000"><g filter="url(#u1)"><text x="5.13" y="666" font-size="11" textLength="87.89" lengthAdjust="spacingAndGlyphs">For Help, press F1</text>
<text x="877.17" y="666" font-size="11" textLength="23.17" lengthAdjust="spacingAndGlyphs">NUM</text></g></svg>
<div class="a" style="left:848px;top:654px;width:26px;height:16px;border-top:1px solid #aca899;border-left:1px solid #aca899;border-right:1px solid #fff;border-bottom:1px solid #fff"></div>
<div class="a" style="left:876px;top:654px;width:28px;height:16px;border-top:1px solid #aca899;border-left:1px solid #aca899;border-right:1px solid #fff;border-bottom:1px solid #fff"></div>

<div class="a" style="left:906px;top:654px;width:31px;height:16px;border-top:1px solid #aca899;border-left:1px solid #aca899;border-right:1px solid #fff;border-bottom:1px solid #fff"></div>
<svg class="a" style="left:942px;top:656px" width="14" height="14"><path d="M12.5,1.5L1.5,12.5M12.5,5.5L5.5,12.5M12.5,9.5L9.5,12.5" stroke="#aca899" stroke-width="1.4"/><path d="M13.5,2.5L2.5,13.5M13.5,6.5L6.5,13.5M13.5,10.5L10.5,13.5" stroke="#fff" stroke-width="1"/></svg>
</body></html>
